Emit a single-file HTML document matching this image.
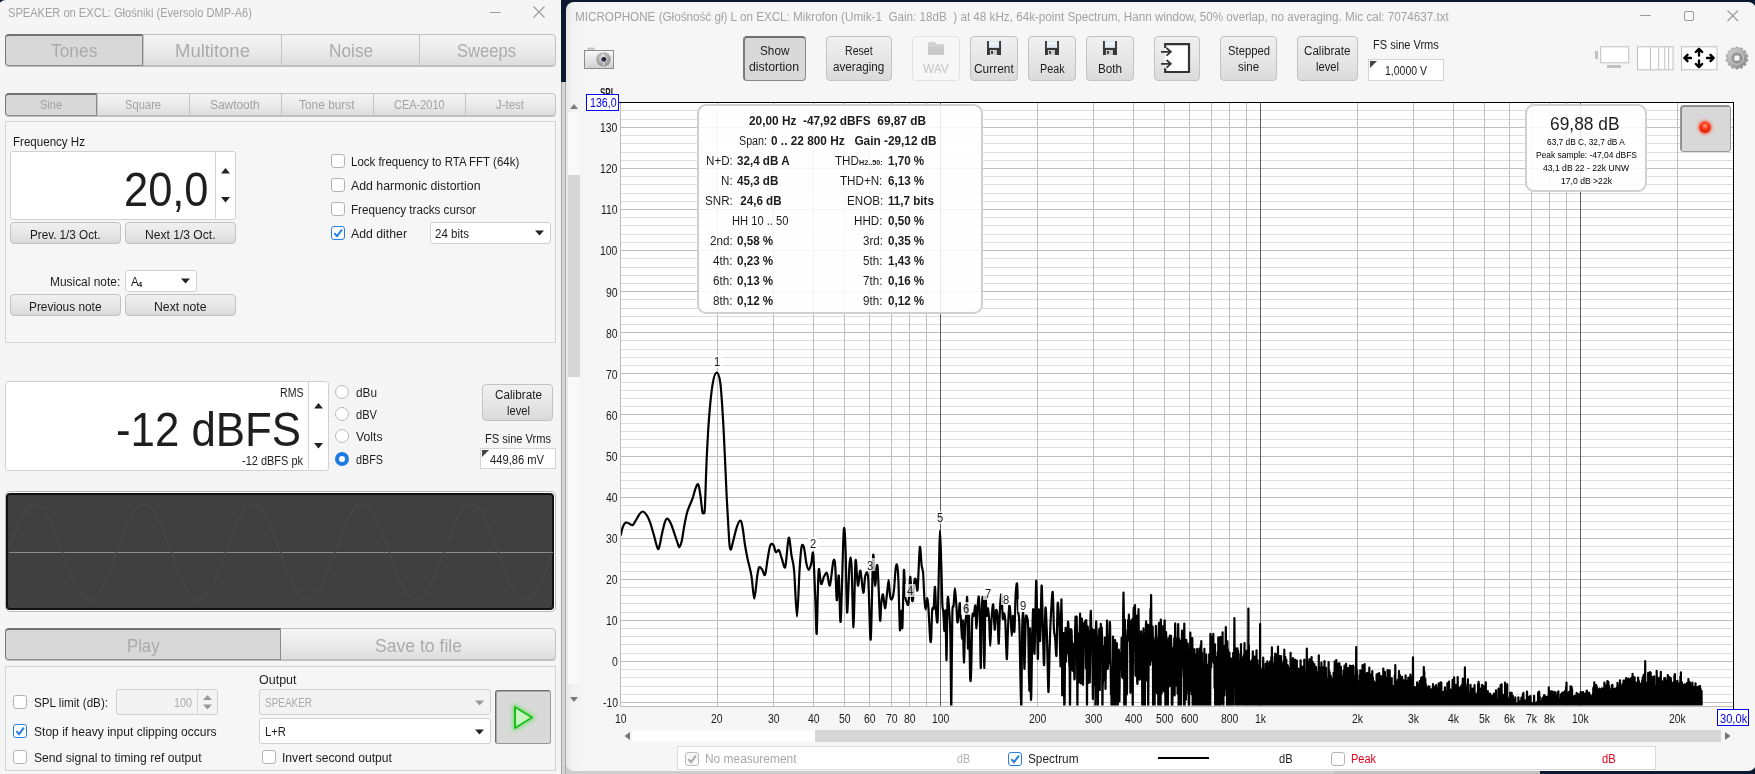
<!DOCTYPE html>
<html><head><meta charset="utf-8"><title>REW</title><style>
html,body{margin:0;padding:0;}
body{width:1755px;height:774px;overflow:hidden;position:relative;background:#f5f5f5;font-family:"Liberation Sans",sans-serif;}
.abs,.t,.tbar,.tsel,.panel,.field,.btn,.cb,.rb{position:absolute;box-sizing:border-box;}
.t{white-space:pre;line-height:1;transform-origin:0 0;}
.tbar{border:1px solid #c2c2c2;border-radius:4px;background:linear-gradient(#f4f4f4,#e9e9e9 60%,#dcdcdc);box-shadow:0 1px 0 #bdbdbd;}
.tsel{border:1px solid #8a8a8a;border-top:2px solid #727272;border-left:1.5px solid #777;background:#d8d8d8;}
.panel{border:1px solid #d4d4d4;background:#f6f6f6;}
.field{border:1px solid #d0d0d0;border-radius:3px;background:#fff;}
.btn{border:1px solid #c2c2c2;border-radius:4px;background:linear-gradient(#f0f0f0,#e6e6e6 55%,#dadada);}
.cb{border:1px solid #b4b4b4;border-radius:3px;background:#fff;}
.cb.on{border-color:#2a7de1;}
.cb.dis{border-color:#bdbdbd;background:#f6f6f6;}
.cb svg{position:absolute;left:0;top:0;}
.rb{border:1px solid #b8b8b8;border-radius:50%;background:#fff;}
.rb.on{border:4.5px solid #1e7be6;}
</style></head><body>
<div class="abs" style="left:0px;top:0px;width:10px;height:10px;background:#0b1a30;"></div>
<div class="abs" style="left:-2px;top:0px;width:563px;height:774px;background:#f5f5f5;border-top-left-radius:8px;"></div>
<span class="t" style="left:8.30px;top:6.62px;font-size:12.5px;color:#a2a2a2;transform:scaleX(0.8869);">SPEAKER on EXCL: Głośniki (Eversolo DMP-A6)</span>
<svg class="abs" style="left:485px;top:2px" width="70" height="22"><path d="M5 10.5H15.5" stroke="#999" stroke-width="1" fill="none"/><path d="M48.5 4.5L59.5 15.5M59.5 4.5L48.5 15.5" stroke="#999" stroke-width="1.1" fill="none"/></svg>
<div class="tbar" style="left:5px;top:34px;width:551px;height:32px;"></div>
<div class="tsel" style="left:5px;top:34px;width:138px;height:32px;border-radius:4px 0 0 4px;"></div>
<div class="abs" style="left:143px;top:35px;width:1px;height:30px;background:#c4c4c4;"></div>
<div class="abs" style="left:281px;top:35px;width:1px;height:30px;background:#c4c4c4;"></div>
<div class="abs" style="left:419px;top:35px;width:1px;height:30px;background:#c4c4c4;"></div>
<span class="t" style="left:51.25px;top:42.14px;font-size:18.5px;color:#ababab;transform:scaleX(0.9379);">Tones</span>
<span class="t" style="left:174.75px;top:42.14px;font-size:18.5px;color:#ababab;transform:scaleX(0.9978);">Multitone</span>
<span class="t" style="left:328.75px;top:42.14px;font-size:18.5px;color:#ababab;transform:scaleX(0.9324);">Noise</span>
<span class="t" style="left:457.35px;top:42.14px;font-size:18.5px;color:#ababab;transform:scaleX(0.8979);">Sweeps</span>
<div class="tbar" style="left:5px;top:93px;width:551px;height:23px;"></div>
<div class="tsel" style="left:5px;top:93px;width:92px;height:23px;border-radius:4px 0 0 4px;"></div>
<div class="abs" style="left:97px;top:94px;width:1px;height:21px;background:#c4c4c4;"></div>
<div class="abs" style="left:189px;top:94px;width:1px;height:21px;background:#c4c4c4;"></div>
<div class="abs" style="left:281px;top:94px;width:1px;height:21px;background:#c4c4c4;"></div>
<div class="abs" style="left:373px;top:94px;width:1px;height:21px;background:#c4c4c4;"></div>
<div class="abs" style="left:465px;top:94px;width:1px;height:21px;background:#c4c4c4;"></div>
<span class="t" style="left:40.25px;top:99.24px;font-size:12px;color:#a2a2a2;transform:scaleX(0.9201);">Sine</span>
<span class="t" style="left:125.15px;top:99.24px;font-size:12px;color:#a2a2a2;transform:scaleX(0.9329);">Square</span>
<span class="t" style="left:209.90px;top:99.24px;font-size:12px;color:#a2a2a2;transform:scaleX(0.9913);">Sawtooth</span>
<span class="t" style="left:299.10px;top:99.24px;font-size:12px;color:#a2a2a2;transform:scaleX(0.9922);">Tone burst</span>
<span class="t" style="left:394.35px;top:99.24px;font-size:12px;color:#a2a2a2;transform:scaleX(0.9157);">CEA-2010</span>
<span class="t" style="left:496.05px;top:99.24px;font-size:12px;color:#a2a2a2;transform:scaleX(0.9510);">J-test</span>
<div class="panel" style="left:5px;top:121px;width:551px;height:222px;"></div>
<span class="t" style="left:13.00px;top:135.52px;font-size:12.5px;color:#1c1c1c;transform:scaleX(0.9253);">Frequency Hz</span>
<div class="field" style="left:10px;top:151px;width:226px;height:69px;"></div>
<div class="abs" style="left:215px;top:152px;width:1px;height:66px;background:#d0d0d0;"></div>
<span class="t" style="left:123.50px;top:165.59px;font-size:47.5px;color:#1e1e1e;transform:scaleX(0.9140);">20,0</span>
<svg class="abs" style="left:216px;top:152px" width="19" height="66"><path d="M5 21.5L9.5 16L14 21.5Z M5 45L9.5 50.5L14 45Z" fill="#222"/></svg>
<div class="btn" style="left:10px;top:222px;width:111px;height:22px;"></div>
<span class="t" style="left:30.05px;top:228.64px;font-size:12px;color:#1c1c1c;transform:scaleX(0.9728);">Prev. 1/3 Oct.</span>
<div class="btn" style="left:125px;top:222px;width:111px;height:22px;"></div>
<span class="t" style="left:145.05px;top:228.64px;font-size:12px;color:#1c1c1c;transform:scaleX(1.0068);">Next 1/3 Oct.</span>
<span class="t" style="left:50.30px;top:276.22px;font-size:12.5px;color:#1c1c1c;transform:scaleX(0.9532);">Musical note:</span>
<div class="field" style="left:125px;top:270px;width:72px;height:22px;"></div>
<span class="t" style="left:130.50px;top:276.22px;font-size:12.5px;color:#1c1c1c;transform:scaleX(0.9300);">A</span>
<span class="t" style="left:138.30px;top:280.63px;font-size:8px;color:#1c1c1c;transform:scaleX(0.9500);font-weight:bold;">4</span>
<svg class="abs" style="left:180px;top:277px" width="12" height="8"><path d="M1 1.5H10L5.5 6.5Z" fill="#222"/></svg>
<div class="btn" style="left:10px;top:294px;width:111px;height:22px;"></div>
<span class="t" style="left:29.05px;top:300.64px;font-size:12px;color:#1c1c1c;transform:scaleX(0.9880);">Previous note</span>
<div class="btn" style="left:125px;top:294px;width:111px;height:22px;"></div>
<span class="t" style="left:154.05px;top:300.64px;font-size:12px;color:#1c1c1c;transform:scaleX(1.0221);">Next note</span>
<div class="cb" style="left:331px;top:154px;width:14px;height:14px;"></div>
<span class="t" style="left:351.40px;top:156.22px;font-size:12.5px;color:#1c1c1c;transform:scaleX(0.9171);">Lock frequency to RTA FFT (64k)</span>
<div class="cb" style="left:331px;top:178px;width:14px;height:14px;"></div>
<span class="t" style="left:351.40px;top:180.22px;font-size:12.5px;color:#1c1c1c;transform:scaleX(0.9861);">Add harmonic distortion</span>
<div class="cb" style="left:331px;top:202px;width:14px;height:14px;"></div>
<span class="t" style="left:351.40px;top:204.22px;font-size:12.5px;color:#1c1c1c;transform:scaleX(0.9323);">Frequency tracks cursor</span>
<div class="cb on" style="left:331px;top:226px;width:14px;height:14px;"><svg width="12" height="12"><path d="M2.3 6.2L5 9.2L9.9 2.6" fill="none" stroke="#2a7de1" stroke-width="2"/></svg></div>
<span class="t" style="left:351.40px;top:228.22px;font-size:12.5px;color:#1c1c1c;transform:scaleX(0.9827);">Add dither</span>
<div class="field" style="left:430px;top:222px;width:121px;height:22px;"></div>
<span class="t" style="left:435.00px;top:228.22px;font-size:12.5px;color:#1c1c1c;transform:scaleX(0.9232);">24 bits</span>
<svg class="abs" style="left:534px;top:229px" width="12" height="8"><path d="M1 1.5H10L5.5 6.5Z" fill="#222"/></svg>
<div class="field" style="left:5px;top:381px;width:324px;height:90px;"></div>
<div class="abs" style="left:308px;top:382px;width:1px;height:87px;background:#d0d0d0;"></div>
<span class="t" style="left:279.50px;top:387.22px;font-size:12.5px;color:#1c1c1c;transform:scaleX(0.8460);">RMS</span>
<span class="t" style="left:116.00px;top:406.17px;font-size:48px;color:#1e1e1e;transform:scaleX(0.9124);">-12 dBFS</span>
<span class="t" style="left:242.00px;top:455.22px;font-size:12.5px;color:#1c1c1c;transform:scaleX(0.8780);">-12 dBFS pk</span>
<svg class="abs" style="left:309px;top:382px" width="19" height="87"><path d="M5 26.5L9.5 21L14 26.5Z M5 61L9.5 66.5L14 61Z" fill="#222"/></svg>
<div class="rb" style="left:335px;top:385px;width:14px;height:14px;"></div>
<span class="t" style="left:356.00px;top:387.12px;font-size:12.5px;color:#1c1c1c;transform:scaleX(0.9442);">dBu</span>
<div class="rb" style="left:335px;top:407px;width:14px;height:14px;"></div>
<span class="t" style="left:356.00px;top:409.02px;font-size:12.5px;color:#1c1c1c;transform:scaleX(0.8888);">dBV</span>
<div class="rb" style="left:335px;top:429px;width:14px;height:14px;"></div>
<span class="t" style="left:356.00px;top:431.02px;font-size:12.5px;color:#1c1c1c;transform:scaleX(0.9778);">Volts</span>
<div class="rb on" style="left:335px;top:452px;width:14px;height:14px;"></div>
<span class="t" style="left:356.00px;top:453.62px;font-size:12.5px;color:#1c1c1c;transform:scaleX(0.8636);">dBFS</span>
<div class="btn" style="left:482px;top:384px;width:71px;height:37px;"></div>
<span class="t" style="left:494.50px;top:389.22px;font-size:12.5px;color:#1c1c1c;transform:scaleX(0.9395);">Calibrate</span>
<span class="t" style="left:506.50px;top:405.22px;font-size:12.5px;color:#1c1c1c;transform:scaleX(0.8946);">level</span>
<span class="t" style="left:485.00px;top:432.62px;font-size:12.5px;color:#1c1c1c;transform:scaleX(0.8853);">FS sine Vrms</span>
<div class="abs" style="left:480px;top:448px;width:76px;height:21px;background:#fff;border:1px solid #d4d4d4;"></div>
<svg class="abs" style="left:481px;top:449px" width="9" height="9"><path d="M1 1H8L1 8Z" fill="#444"/></svg>
<span class="t" style="left:490.00px;top:453.72px;font-size:12.5px;color:#1c1c1c;transform:scaleX(0.8932);">449,86 mV</span>
<div class="abs" style="left:5px;top:491px;width:551px;height:121px;border:1px solid #b8b8b8;border-radius:5px;background:#fff;"></div>
<div class="abs" style="left:6px;top:493px;width:548px;height:117px;border:2px solid #111;border-radius:4px;background:#404040;"></div>
<svg class="abs" style="left:0;top:0" width="561" height="774"><path d="M9 552.5H553" stroke="#8c8c8c" stroke-width="1"/><polyline points="9.0,548.5 9.5,547.2 10.0,545.8 10.5,544.4 11.0,543.1 11.5,541.7 12.0,540.4 12.5,539.0 13.0,537.7 13.5,536.4 14.0,535.1 14.5,533.8 15.0,532.5 15.5,531.3 16.0,530.0 16.5,528.8 17.0,527.6 17.5,526.4 18.0,525.3 18.5,524.1 19.0,523.0 19.5,521.9 20.0,520.9 20.5,519.8 21.0,518.8 21.5,517.8 22.0,516.9 22.5,515.9 23.0,515.0 23.5,514.2 24.0,513.3 24.5,512.5 25.0,511.8 25.5,511.0 26.0,510.3 26.5,509.6 27.0,509.0 27.5,508.4 28.0,507.9 28.5,507.3 29.0,506.8 29.5,506.4 30.0,506.0 30.5,505.6 31.0,505.3 31.5,505.0 32.0,504.7 32.5,504.5 33.0,504.3 33.5,504.2 34.0,504.1 34.5,504.0 35.0,504.0 35.5,504.0 36.0,504.1 36.5,504.2 37.0,504.3 37.5,504.5 38.0,504.7 38.5,505.0 39.0,505.3 39.5,505.6 40.0,506.0 40.5,506.4 41.0,506.8 41.5,507.3 42.0,507.9 42.5,508.4 43.0,509.0 43.5,509.6 44.0,510.3 44.5,511.0 45.0,511.8 45.5,512.5 46.0,513.3 46.5,514.2 47.0,515.0 47.5,515.9 48.0,516.9 48.5,517.8 49.0,518.8 49.5,519.8 50.0,520.9 50.5,521.9 51.0,523.0 51.5,524.1 52.0,525.3 52.5,526.4 53.0,527.6 53.5,528.8 54.0,530.0 54.5,531.3 55.0,532.5 55.5,533.8 56.0,535.1 56.5,536.4 57.0,537.7 57.5,539.0 58.0,540.4 58.5,541.7 59.0,543.1 59.5,544.4 60.0,545.8 60.5,547.2 61.0,548.5 61.5,549.9 62.0,551.3 62.5,552.7 63.0,554.1 63.5,555.5 64.0,556.8 64.5,558.2 65.0,559.6 65.5,560.9 66.0,562.3 66.5,563.6 67.0,565.0 67.5,566.3 68.0,567.6 68.5,568.9 69.0,570.2 69.5,571.5 70.0,572.7 70.5,574.0 71.0,575.2 71.5,576.4 72.0,577.6 72.5,578.7 73.0,579.9 73.5,581.0 74.0,582.1 74.5,583.1 75.0,584.2 75.5,585.2 76.0,586.2 76.5,587.1 77.0,588.1 77.5,589.0 78.0,589.8 78.5,590.7 79.0,591.5 79.5,592.2 80.0,593.0 80.5,593.7 81.0,594.4 81.5,595.0 82.0,595.6 82.5,596.1 83.0,596.7 83.5,597.2 84.0,597.6 84.5,598.0 85.0,598.4 85.5,598.7 86.0,599.0 86.5,599.3 87.0,599.5 87.5,599.7 88.0,599.8 88.5,599.9 89.0,600.0 89.5,600.0 90.0,600.0 90.5,599.9 91.0,599.8 91.5,599.7 92.0,599.5 92.5,599.3 93.0,599.0 93.5,598.7 94.0,598.4 94.5,598.0 95.0,597.6 95.5,597.2 96.0,596.7 96.5,596.1 97.0,595.6 97.5,595.0 98.0,594.4 98.5,593.7 99.0,593.0 99.5,592.2 100.0,591.5 100.5,590.7 101.0,589.8 101.5,589.0 102.0,588.1 102.5,587.1 103.0,586.2 103.5,585.2 104.0,584.2 104.5,583.1 105.0,582.1 105.5,581.0 106.0,579.9 106.5,578.7 107.0,577.6 107.5,576.4 108.0,575.2 108.5,574.0 109.0,572.7 109.5,571.5 110.0,570.2 110.5,568.9 111.0,567.6 111.5,566.3 112.0,565.0 112.5,563.6 113.0,562.3 113.5,560.9 114.0,559.6 114.5,558.2 115.0,556.8 115.5,555.5 116.0,554.1 116.5,552.7 117.0,551.3 117.5,549.9 118.0,548.5 118.5,547.2 119.0,545.8 119.5,544.4 120.0,543.1 120.5,541.7 121.0,540.4 121.5,539.0 122.0,537.7 122.5,536.4 123.0,535.1 123.5,533.8 124.0,532.5 124.5,531.3 125.0,530.0 125.5,528.8 126.0,527.6 126.5,526.4 127.0,525.3 127.5,524.1 128.0,523.0 128.5,521.9 129.0,520.9 129.5,519.8 130.0,518.8 130.5,517.8 131.0,516.9 131.5,515.9 132.0,515.0 132.5,514.2 133.0,513.3 133.5,512.5 134.0,511.8 134.5,511.0 135.0,510.3 135.5,509.6 136.0,509.0 136.5,508.4 137.0,507.9 137.5,507.3 138.0,506.8 138.5,506.4 139.0,506.0 139.5,505.6 140.0,505.3 140.5,505.0 141.0,504.7 141.5,504.5 142.0,504.3 142.5,504.2 143.0,504.1 143.5,504.0 144.0,504.0 144.5,504.0 145.0,504.1 145.5,504.2 146.0,504.3 146.5,504.5 147.0,504.7 147.5,505.0 148.0,505.3 148.5,505.6 149.0,506.0 149.5,506.4 150.0,506.8 150.5,507.3 151.0,507.9 151.5,508.4 152.0,509.0 152.5,509.6 153.0,510.3 153.5,511.0 154.0,511.8 154.5,512.5 155.0,513.3 155.5,514.2 156.0,515.0 156.5,515.9 157.0,516.9 157.5,517.8 158.0,518.8 158.5,519.8 159.0,520.9 159.5,521.9 160.0,523.0 160.5,524.1 161.0,525.3 161.5,526.4 162.0,527.6 162.5,528.8 163.0,530.0 163.5,531.3 164.0,532.5 164.5,533.8 165.0,535.1 165.5,536.4 166.0,537.7 166.5,539.0 167.0,540.4 167.5,541.7 168.0,543.1 168.5,544.4 169.0,545.8 169.5,547.2 170.0,548.5 170.5,549.9 171.0,551.3 171.5,552.7 172.0,554.1 172.5,555.5 173.0,556.8 173.5,558.2 174.0,559.6 174.5,560.9 175.0,562.3 175.5,563.6 176.0,565.0 176.5,566.3 177.0,567.6 177.5,568.9 178.0,570.2 178.5,571.5 179.0,572.7 179.5,574.0 180.0,575.2 180.5,576.4 181.0,577.6 181.5,578.7 182.0,579.9 182.5,581.0 183.0,582.1 183.5,583.1 184.0,584.2 184.5,585.2 185.0,586.2 185.5,587.1 186.0,588.1 186.5,589.0 187.0,589.8 187.5,590.7 188.0,591.5 188.5,592.2 189.0,593.0 189.5,593.7 190.0,594.4 190.5,595.0 191.0,595.6 191.5,596.1 192.0,596.7 192.5,597.2 193.0,597.6 193.5,598.0 194.0,598.4 194.5,598.7 195.0,599.0 195.5,599.3 196.0,599.5 196.5,599.7 197.0,599.8 197.5,599.9 198.0,600.0 198.5,600.0 199.0,600.0 199.5,599.9 200.0,599.8 200.5,599.7 201.0,599.5 201.5,599.3 202.0,599.0 202.5,598.7 203.0,598.4 203.5,598.0 204.0,597.6 204.5,597.2 205.0,596.7 205.5,596.1 206.0,595.6 206.5,595.0 207.0,594.4 207.5,593.7 208.0,593.0 208.5,592.2 209.0,591.5 209.5,590.7 210.0,589.8 210.5,589.0 211.0,588.1 211.5,587.1 212.0,586.2 212.5,585.2 213.0,584.2 213.5,583.1 214.0,582.1 214.5,581.0 215.0,579.9 215.5,578.7 216.0,577.6 216.5,576.4 217.0,575.2 217.5,574.0 218.0,572.7 218.5,571.5 219.0,570.2 219.5,568.9 220.0,567.6 220.5,566.3 221.0,565.0 221.5,563.6 222.0,562.3 222.5,560.9 223.0,559.6 223.5,558.2 224.0,556.8 224.5,555.5 225.0,554.1 225.5,552.7 226.0,551.3 226.5,549.9 227.0,548.5 227.5,547.2 228.0,545.8 228.5,544.4 229.0,543.1 229.5,541.7 230.0,540.4 230.5,539.0 231.0,537.7 231.5,536.4 232.0,535.1 232.5,533.8 233.0,532.5 233.5,531.3 234.0,530.0 234.5,528.8 235.0,527.6 235.5,526.4 236.0,525.3 236.5,524.1 237.0,523.0 237.5,521.9 238.0,520.9 238.5,519.8 239.0,518.8 239.5,517.8 240.0,516.9 240.5,515.9 241.0,515.0 241.5,514.2 242.0,513.3 242.5,512.5 243.0,511.8 243.5,511.0 244.0,510.3 244.5,509.6 245.0,509.0 245.5,508.4 246.0,507.9 246.5,507.3 247.0,506.8 247.5,506.4 248.0,506.0 248.5,505.6 249.0,505.3 249.5,505.0 250.0,504.7 250.5,504.5 251.0,504.3 251.5,504.2 252.0,504.1 252.5,504.0 253.0,504.0 253.5,504.0 254.0,504.1 254.5,504.2 255.0,504.3 255.5,504.5 256.0,504.7 256.5,505.0 257.0,505.3 257.5,505.6 258.0,506.0 258.5,506.4 259.0,506.8 259.5,507.3 260.0,507.9 260.5,508.4 261.0,509.0 261.5,509.6 262.0,510.3 262.5,511.0 263.0,511.8 263.5,512.5 264.0,513.3 264.5,514.2 265.0,515.0 265.5,515.9 266.0,516.9 266.5,517.8 267.0,518.8 267.5,519.8 268.0,520.9 268.5,521.9 269.0,523.0 269.5,524.1 270.0,525.3 270.5,526.4 271.0,527.6 271.5,528.8 272.0,530.0 272.5,531.3 273.0,532.5 273.5,533.8 274.0,535.1 274.5,536.4 275.0,537.7 275.5,539.0 276.0,540.4 276.5,541.7 277.0,543.1 277.5,544.4 278.0,545.8 278.5,547.2 279.0,548.5 279.5,549.9 280.0,551.3 280.5,552.7 281.0,554.1 281.5,555.5 282.0,556.8 282.5,558.2 283.0,559.6 283.5,560.9 284.0,562.3 284.5,563.6 285.0,565.0 285.5,566.3 286.0,567.6 286.5,568.9 287.0,570.2 287.5,571.5 288.0,572.7 288.5,574.0 289.0,575.2 289.5,576.4 290.0,577.6 290.5,578.7 291.0,579.9 291.5,581.0 292.0,582.1 292.5,583.1 293.0,584.2 293.5,585.2 294.0,586.2 294.5,587.1 295.0,588.1 295.5,589.0 296.0,589.8 296.5,590.7 297.0,591.5 297.5,592.2 298.0,593.0 298.5,593.7 299.0,594.4 299.5,595.0 300.0,595.6 300.5,596.1 301.0,596.7 301.5,597.2 302.0,597.6 302.5,598.0 303.0,598.4 303.5,598.7 304.0,599.0 304.5,599.3 305.0,599.5 305.5,599.7 306.0,599.8 306.5,599.9 307.0,600.0 307.5,600.0 308.0,600.0 308.5,599.9 309.0,599.8 309.5,599.7 310.0,599.5 310.5,599.3 311.0,599.0 311.5,598.7 312.0,598.4 312.5,598.0 313.0,597.6 313.5,597.2 314.0,596.7 314.5,596.1 315.0,595.6 315.5,595.0 316.0,594.4 316.5,593.7 317.0,593.0 317.5,592.2 318.0,591.5 318.5,590.7 319.0,589.8 319.5,589.0 320.0,588.1 320.5,587.1 321.0,586.2 321.5,585.2 322.0,584.2 322.5,583.1 323.0,582.1 323.5,581.0 324.0,579.9 324.5,578.7 325.0,577.6 325.5,576.4 326.0,575.2 326.5,574.0 327.0,572.7 327.5,571.5 328.0,570.2 328.5,568.9 329.0,567.6 329.5,566.3 330.0,565.0 330.5,563.6 331.0,562.3 331.5,560.9 332.0,559.6 332.5,558.2 333.0,556.8 333.5,555.5 334.0,554.1 334.5,552.7 335.0,551.3 335.5,549.9 336.0,548.5 336.5,547.2 337.0,545.8 337.5,544.4 338.0,543.1 338.5,541.7 339.0,540.4 339.5,539.0 340.0,537.7 340.5,536.4 341.0,535.1 341.5,533.8 342.0,532.5 342.5,531.3 343.0,530.0 343.5,528.8 344.0,527.6 344.5,526.4 345.0,525.3 345.5,524.1 346.0,523.0 346.5,521.9 347.0,520.9 347.5,519.8 348.0,518.8 348.5,517.8 349.0,516.9 349.5,515.9 350.0,515.0 350.5,514.2 351.0,513.3 351.5,512.5 352.0,511.8 352.5,511.0 353.0,510.3 353.5,509.6 354.0,509.0 354.5,508.4 355.0,507.9 355.5,507.3 356.0,506.8 356.5,506.4 357.0,506.0 357.5,505.6 358.0,505.3 358.5,505.0 359.0,504.7 359.5,504.5 360.0,504.3 360.5,504.2 361.0,504.1 361.5,504.0 362.0,504.0 362.5,504.0 363.0,504.1 363.5,504.2 364.0,504.3 364.5,504.5 365.0,504.7 365.5,505.0 366.0,505.3 366.5,505.6 367.0,506.0 367.5,506.4 368.0,506.8 368.5,507.3 369.0,507.9 369.5,508.4 370.0,509.0 370.5,509.6 371.0,510.3 371.5,511.0 372.0,511.8 372.5,512.5 373.0,513.3 373.5,514.2 374.0,515.0 374.5,515.9 375.0,516.9 375.5,517.8 376.0,518.8 376.5,519.8 377.0,520.9 377.5,521.9 378.0,523.0 378.5,524.1 379.0,525.3 379.5,526.4 380.0,527.6 380.5,528.8 381.0,530.0 381.5,531.3 382.0,532.5 382.5,533.8 383.0,535.1 383.5,536.4 384.0,537.7 384.5,539.0 385.0,540.4 385.5,541.7 386.0,543.1 386.5,544.4 387.0,545.8 387.5,547.2 388.0,548.5 388.5,549.9 389.0,551.3 389.5,552.7 390.0,554.1 390.5,555.5 391.0,556.8 391.5,558.2 392.0,559.6 392.5,560.9 393.0,562.3 393.5,563.6 394.0,565.0 394.5,566.3 395.0,567.6 395.5,568.9 396.0,570.2 396.5,571.5 397.0,572.7 397.5,574.0 398.0,575.2 398.5,576.4 399.0,577.6 399.5,578.7 400.0,579.9 400.5,581.0 401.0,582.1 401.5,583.1 402.0,584.2 402.5,585.2 403.0,586.2 403.5,587.1 404.0,588.1 404.5,589.0 405.0,589.8 405.5,590.7 406.0,591.5 406.5,592.2 407.0,593.0 407.5,593.7 408.0,594.4 408.5,595.0 409.0,595.6 409.5,596.1 410.0,596.7 410.5,597.2 411.0,597.6 411.5,598.0 412.0,598.4 412.5,598.7 413.0,599.0 413.5,599.3 414.0,599.5 414.5,599.7 415.0,599.8 415.5,599.9 416.0,600.0 416.5,600.0 417.0,600.0 417.5,599.9 418.0,599.8 418.5,599.7 419.0,599.5 419.5,599.3 420.0,599.0 420.5,598.7 421.0,598.4 421.5,598.0 422.0,597.6 422.5,597.2 423.0,596.7 423.5,596.1 424.0,595.6 424.5,595.0 425.0,594.4 425.5,593.7 426.0,593.0 426.5,592.2 427.0,591.5 427.5,590.7 428.0,589.8 428.5,589.0 429.0,588.1 429.5,587.1 430.0,586.2 430.5,585.2 431.0,584.2 431.5,583.1 432.0,582.1 432.5,581.0 433.0,579.9 433.5,578.7 434.0,577.6 434.5,576.4 435.0,575.2 435.5,574.0 436.0,572.7 436.5,571.5 437.0,570.2 437.5,568.9 438.0,567.6 438.5,566.3 439.0,565.0 439.5,563.6 440.0,562.3 440.5,560.9 441.0,559.6 441.5,558.2 442.0,556.8 442.5,555.5 443.0,554.1 443.5,552.7 444.0,551.3 444.5,549.9 445.0,548.5 445.5,547.2 446.0,545.8 446.5,544.4 447.0,543.1 447.5,541.7 448.0,540.4 448.5,539.0 449.0,537.7 449.5,536.4 450.0,535.1 450.5,533.8 451.0,532.5 451.5,531.3 452.0,530.0 452.5,528.8 453.0,527.6 453.5,526.4 454.0,525.3 454.5,524.1 455.0,523.0 455.5,521.9 456.0,520.9 456.5,519.8 457.0,518.8 457.5,517.8 458.0,516.9 458.5,515.9 459.0,515.0 459.5,514.2 460.0,513.3 460.5,512.5 461.0,511.8 461.5,511.0 462.0,510.3 462.5,509.6 463.0,509.0 463.5,508.4 464.0,507.9 464.5,507.3 465.0,506.8 465.5,506.4 466.0,506.0 466.5,505.6 467.0,505.3 467.5,505.0 468.0,504.7 468.5,504.5 469.0,504.3 469.5,504.2 470.0,504.1 470.5,504.0 471.0,504.0 471.5,504.0 472.0,504.1 472.5,504.2 473.0,504.3 473.5,504.5 474.0,504.7 474.5,505.0 475.0,505.3 475.5,505.6 476.0,506.0 476.5,506.4 477.0,506.8 477.5,507.3 478.0,507.9 478.5,508.4 479.0,509.0 479.5,509.6 480.0,510.3 480.5,511.0 481.0,511.8 481.5,512.5 482.0,513.3 482.5,514.2 483.0,515.0 483.5,515.9 484.0,516.9 484.5,517.8 485.0,518.8 485.5,519.8 486.0,520.9 486.5,521.9 487.0,523.0 487.5,524.1 488.0,525.3 488.5,526.4 489.0,527.6 489.5,528.8 490.0,530.0 490.5,531.3 491.0,532.5 491.5,533.8 492.0,535.1 492.5,536.4 493.0,537.7 493.5,539.0 494.0,540.4 494.5,541.7 495.0,543.1 495.5,544.4 496.0,545.8 496.5,547.2 497.0,548.5 497.5,549.9 498.0,551.3 498.5,552.7 499.0,554.1 499.5,555.5 500.0,556.8 500.5,558.2 501.0,559.6 501.5,560.9 502.0,562.3 502.5,563.6 503.0,565.0 503.5,566.3 504.0,567.6 504.5,568.9 505.0,570.2 505.5,571.5 506.0,572.7 506.5,574.0 507.0,575.2 507.5,576.4 508.0,577.6 508.5,578.7 509.0,579.9 509.5,581.0 510.0,582.1 510.5,583.1 511.0,584.2 511.5,585.2 512.0,586.2 512.5,587.1 513.0,588.1 513.5,589.0 514.0,589.8 514.5,590.7 515.0,591.5 515.5,592.2 516.0,593.0 516.5,593.7 517.0,594.4 517.5,595.0 518.0,595.6 518.5,596.1 519.0,596.7 519.5,597.2 520.0,597.6 520.5,598.0 521.0,598.4 521.5,598.7 522.0,599.0 522.5,599.3 523.0,599.5 523.5,599.7 524.0,599.8 524.5,599.9 525.0,600.0 525.5,600.0 526.0,600.0 526.5,599.9 527.0,599.8 527.5,599.7 528.0,599.5 528.5,599.3 529.0,599.0 529.5,598.7 530.0,598.4 530.5,598.0 531.0,597.6 531.5,597.2 532.0,596.7 532.5,596.1 533.0,595.6 533.5,595.0 534.0,594.4 534.5,593.7 535.0,593.0 535.5,592.2 536.0,591.5 536.5,590.7 537.0,589.8 537.5,589.0 538.0,588.1 538.5,587.1 539.0,586.2 539.5,585.2 540.0,584.2 540.5,583.1 541.0,582.1 541.5,581.0 542.0,579.9 542.5,578.7 543.0,577.6 543.5,576.4 544.0,575.2 544.5,574.0 545.0,572.7 545.5,571.5 546.0,570.2 546.5,568.9 547.0,567.6 547.5,566.3 548.0,565.0 548.5,563.6 549.0,562.3 549.5,560.9 550.0,559.6 550.5,558.2 551.0,556.8 551.5,555.5 552.0,554.1" fill="none" stroke="#484848" stroke-width="1.3"/></svg>
<div class="tbar" style="left:5px;top:628px;width:551px;height:32px;"></div>
<div class="tsel" style="left:5px;top:628px;width:276px;height:32px;border-radius:4px 0 0 4px;"></div>
<span class="t" style="left:126.75px;top:637.14px;font-size:18.5px;color:#ababab;transform:scaleX(0.9030);">Play</span>
<span class="t" style="left:374.50px;top:637.14px;font-size:18.5px;color:#ababab;transform:scaleX(0.9506);">Save to file</span>
<div class="panel" style="left:5px;top:666px;width:551px;height:105px;"></div>
<div class="cb" style="left:13px;top:695px;width:14px;height:14px;"></div>
<span class="t" style="left:33.50px;top:697.22px;font-size:12.5px;color:#1c1c1c;transform:scaleX(0.9318);">SPL limit (dB):</span>
<div class="field" style="left:116px;top:689px;width:102px;height:26px;background:#f3f3f3;"></div>
<div class="abs" style="left:197px;top:690px;width:1px;height:24px;background:#d6d6d6;"></div>
<span class="t" style="left:174.00px;top:697.22px;font-size:12.5px;color:#aaa;transform:scaleX(0.8630);">100</span>
<svg class="abs" style="left:198px;top:690px" width="19" height="24"><path d="M5 10L9.5 5L14 10Z M5 14.5L9.5 19.5L14 14.5Z" fill="#999"/></svg>
<div class="cb on" style="left:13px;top:724px;width:14px;height:14px;"><svg width="12" height="12"><path d="M2.3 6.2L5 9.2L9.9 2.6" fill="none" stroke="#2a7de1" stroke-width="2"/></svg></div>
<span class="t" style="left:33.50px;top:726.42px;font-size:12.5px;color:#1c1c1c;transform:scaleX(0.9656);">Stop if heavy input clipping occurs</span>
<div class="cb" style="left:13px;top:750px;width:14px;height:14px;"></div>
<span class="t" style="left:33.50px;top:752.42px;font-size:12.5px;color:#1c1c1c;transform:scaleX(0.9720);">Send signal to timing ref output</span>
<span class="t" style="left:259.20px;top:674.22px;font-size:12.5px;color:#1c1c1c;transform:scaleX(0.9993);">Output</span>
<div class="field" style="left:259px;top:689px;width:232px;height:26px;background:#f3f3f3;"></div>
<span class="t" style="left:264.50px;top:697.22px;font-size:12.5px;color:#aaa;transform:scaleX(0.7959);">SPEAKER</span>
<svg class="abs" style="left:474px;top:699px" width="12" height="8"><path d="M1 1.5H10L5.5 6.5Z" fill="#999"/></svg>
<div class="field" style="left:259px;top:718px;width:232px;height:26px;"></div>
<span class="t" style="left:264.50px;top:726.42px;font-size:12.5px;color:#1c1c1c;transform:scaleX(0.9021);">L+R</span>
<svg class="abs" style="left:474px;top:728px" width="12" height="8"><path d="M1 1.5H10L5.5 6.5Z" fill="#222"/></svg>
<div class="abs" style="left:495px;top:690px;width:56px;height:54px;background:#d9d9d9;border:1px solid #9a9a9a;border-top-color:#6e6e6e;border-left-color:#6e6e6e;border-radius:3px;box-shadow:inset 1px 1px 0 #a8a8a8;"></div>
<svg class="abs" style="left:505px;top:700px" width="36" height="36"><defs><filter id="gl" x="-50%" y="-50%" width="200%" height="200%"><feGaussianBlur stdDeviation="2"/></filter></defs><path d="M10 7L27 17.5L10 28Z" fill="none" stroke="#3fe23f" stroke-width="4" filter="url(#gl)" opacity=".7"/><path d="M10 7L27 17.5L10 28Z" fill="#c8f5c0" stroke="#19c019" stroke-width="2" stroke-linejoin="round"/></svg>
<div class="cb" style="left:262px;top:750px;width:14px;height:14px;"></div>
<span class="t" style="left:282.00px;top:752.42px;font-size:12.5px;color:#1c1c1c;transform:scaleX(0.9711);">Invert second output</span>
<div class="abs" style="left:561px;top:0px;width:5px;height:774px;background:#d4d4d4;border-left:1px solid #a6a6a6;border-right:1px solid #adadad;box-sizing:border-box;"></div>
<div class="abs" style="left:561px;top:0px;width:5px;height:82px;background:#0b1a30;"></div>
<div class="abs" style="left:566px;top:0px;width:1189px;height:774px;background:#cdcdcd;"></div>
<div class="abs" style="left:566px;top:0px;width:1189px;height:14px;background:#0b1a30;"></div>
<div class="abs" style="left:566px;top:0px;width:12px;height:82px;background:#0b1a30;"></div>
<div class="abs" style="left:1743px;top:0px;width:12px;height:774px;background:#0b1a30;"></div>
<div class="abs" style="left:1540px;top:758px;width:215px;height:16px;background:#0b1a30;"></div>
<div class="abs" style="left:1334px;top:771px;width:206px;height:3px;background:#c2c2c2;"></div>
<div class="abs" style="left:566px;top:2px;width:1189.6px;height:769px;background:linear-gradient(to right,#e6e6e6,#f1f1f1 6px,#f6f6f6 22px);border-radius:8px;"></div>
<span class="t" style="left:574.50px;top:11.42px;font-size:12.5px;color:#a2a2a2;transform:scaleX(0.9335);">MICROPHONE (Głośność gł) L on EXCL: Mikrofon (Umik-1  Gain: 18dB  ) at 48 kHz, 64k-point Spectrum, Hann window, 50% overlap, no averaging. Mic cal: 7074637.txt</span>
<svg class="abs" style="left:1630px;top:4px" width="120" height="24"><path d="M10 11.5H20.5" stroke="#999" stroke-width="1" fill="none"/><rect x="54.5" y="7.5" width="9" height="9" rx="1.5" fill="none" stroke="#999"/><path d="M97.5 6.5L108 17M108 6.5L97.5 17" stroke="#999" stroke-width="1.1" fill="none"/></svg>
<svg class="abs" style="left:580px;top:44px" width="40" height="30"><defs><linearGradient id="cb" x1="0" y1="0" x2="0" y2="1"><stop offset="0" stop-color="#fafafa"/><stop offset="1" stop-color="#cfcfcf"/></linearGradient><radialGradient id="cl" cx=".45" cy=".4" r=".6"><stop offset="0" stop-color="#f4f4f4"/><stop offset=".5" stop-color="#b4b4b4"/><stop offset="1" stop-color="#909090"/></radialGradient></defs><rect x="8" y="4" width="6" height="3" fill="#d0d0d0" stroke="#aaa" stroke-width=".6"/><rect x="4.5" y="6.5" width="29" height="18" fill="url(#cb)" stroke="#8c8c8c"/><path d="M5 7L8 10V21L5 24" fill="none" stroke="#e8e8e8"/><circle cx="23.5" cy="15.4" r="7.2" fill="url(#cl)"/><circle cx="23.7" cy="15.2" r="2.3" fill="#1a1a22"/><circle cx="23.2" cy="15.6" r=".8" fill="#3344cc"/><path d="M23.2 9V12.2M23.6 18.6V21.5" stroke="#fff" stroke-width="1.2" opacity=".7"/></svg>
<div class="abs" style="left:743px;top:36px;width:63px;height:45px;background:#d9d9d9;border:1px solid #8a8a8a;border-top:2px solid #707070;border-left:2px solid #7c7c7c;border-radius:4px;"></div>
<span class="t" style="left:759.80px;top:45.32px;font-size:12.5px;color:#1c1c1c;transform:scaleX(0.9402);">Show</span>
<span class="t" style="left:749.45px;top:61.22px;font-size:12.5px;color:#1c1c1c;transform:scaleX(0.9877);">distortion</span>
<div class="btn" style="left:826px;top:36px;width:66px;height:45px;"></div>
<span class="t" style="left:845.35px;top:45.32px;font-size:12.5px;color:#1c1c1c;transform:scaleX(0.8483);">Reset</span>
<span class="t" style="left:833.35px;top:61.22px;font-size:12.5px;color:#1c1c1c;transform:scaleX(0.9344);">averaging</span>
<div class="abs" style="left:912px;top:36px;width:48px;height:45px;background:#f7f7f7;border:1px solid #e2e2e2;border-radius:4px;"></div>
<svg class="abs" style="left:926px;top:40px" width="20" height="17"><path d="M2 3.5Q2 2 3.5 2H9L10.5 4H16.5Q18 4 18 5.5V8H2Z" fill="#d2d2d2"/><rect x="2" y="7" width="16" height="8" rx="1.5" fill="#c9c9c9"/></svg>
<span class="t" style="left:923.15px;top:62.92px;font-size:12.5px;color:#c2c2c2;transform:scaleX(0.9490);">WAV</span>
<div class="btn" style="left:970px;top:36px;width:48px;height:45px;"></div>
<svg class="abs" style="left:986px;top:40px" width="16" height="16"><path d="M1 1H15V15H1Z" fill="#383838"/><rect x="2.9" y="1" width="10.2" height="6.9" fill="#dfe9f3"/><path d="M4 3.3H12" stroke="#fff" stroke-width="1"/><path d="M4 5.3H12" stroke="#eef4fa" stroke-width=".8"/><rect x="3.9" y="10" width="7" height="5" fill="#cfcfcf"/><rect x="5.2" y="11" width="1.6" height="2.9" fill="#222"/></svg>
<span class="t" style="left:974.35px;top:62.92px;font-size:12.5px;color:#1c1c1c;transform:scaleX(0.9524);">Current</span>
<div class="btn" style="left:1028px;top:36px;width:48px;height:45px;"></div>
<svg class="abs" style="left:1044px;top:40px" width="16" height="16"><path d="M1 1H15V15H1Z" fill="#383838"/><rect x="2.9" y="1" width="10.2" height="6.9" fill="#dfe9f3"/><path d="M4 3.3H12" stroke="#fff" stroke-width="1"/><path d="M4 5.3H12" stroke="#eef4fa" stroke-width=".8"/><rect x="3.9" y="10" width="7" height="5" fill="#cfcfcf"/><rect x="5.2" y="11" width="1.6" height="2.9" fill="#222"/></svg>
<span class="t" style="left:1039.85px;top:62.92px;font-size:12.5px;color:#1c1c1c;transform:scaleX(0.8669);">Peak</span>
<div class="btn" style="left:1086px;top:36px;width:48px;height:45px;"></div>
<svg class="abs" style="left:1102px;top:40px" width="16" height="16"><path d="M1 1H15V15H1Z" fill="#383838"/><rect x="2.9" y="1" width="10.2" height="6.9" fill="#dfe9f3"/><path d="M4 3.3H12" stroke="#fff" stroke-width="1"/><path d="M4 5.3H12" stroke="#eef4fa" stroke-width=".8"/><rect x="3.9" y="10" width="7" height="5" fill="#cfcfcf"/><rect x="5.2" y="11" width="1.6" height="2.9" fill="#222"/></svg>
<span class="t" style="left:1098.20px;top:62.92px;font-size:12.5px;color:#1c1c1c;transform:scaleX(0.9333);">Both</span>
<div class="btn" style="left:1154px;top:36px;width:46px;height:45px;"></div>
<svg class="abs" style="left:1158px;top:40px" width="36" height="36"><path d="M7.2 8V4.2H31V32H7.2V28.2" fill="#fff" stroke="#333" stroke-width="2.2"/><rect x="7.2" y="8" width="3" height="20" fill="#fff"/><path d="M3 11.8H12.5M8.5 8L12.8 11.8L8.5 15.6M3 23.8H12.5M8.5 20L12.8 23.8L8.5 27.6" fill="none" stroke="#333" stroke-width="1.8"/></svg>
<div class="btn" style="left:1220px;top:36px;width:57px;height:45px;"></div>
<span class="t" style="left:1227.60px;top:45.32px;font-size:12.5px;color:#1c1c1c;transform:scaleX(0.9018);">Stepped</span>
<span class="t" style="left:1238.10px;top:61.22px;font-size:12.5px;color:#1c1c1c;transform:scaleX(0.9158);">sine</span>
<div class="btn" style="left:1297px;top:36px;width:61px;height:45px;"></div>
<span class="t" style="left:1304.25px;top:45.32px;font-size:12.5px;color:#1c1c1c;transform:scaleX(0.9295);">Calibrate</span>
<span class="t" style="left:1316.00px;top:61.22px;font-size:12.5px;color:#1c1c1c;transform:scaleX(0.8946);">level</span>
<span class="t" style="left:1373.00px;top:38.72px;font-size:12.5px;color:#1c1c1c;transform:scaleX(0.8826);">FS sine Vrms</span>
<div class="abs" style="left:1368px;top:59px;width:76px;height:22px;background:#fff;border:1px solid #d4d4d4;"></div>
<svg class="abs" style="left:1369px;top:60px" width="9" height="9"><path d="M1 1H8L1 8Z" fill="#444"/></svg>
<span class="t" style="left:1384.50px;top:65.02px;font-size:12.5px;color:#1c1c1c;transform:scaleX(0.8393);">1,0000 V</span>
<svg class="abs" style="left:1590px;top:40px" width="165" height="36">
<rect x="5" y="11" width="3" height="8" fill="#c2c2c2"/><rect x="10.7" y="6.8" width="28" height="16" fill="#fff" stroke="#c0c0c0"/><rect x="17" y="25" width="14" height="3" fill="#c2c2c2"/>
<rect x="47.5" y="6.8" width="35.5" height="23" fill="#fff" stroke="#c0c0c0"/><path d="M60.5 7V30M68.7 7V30M74.8 7V30M78.6 7V30" stroke="#c0c0c0"/>
<rect x="91.5" y="6.8" width="35.5" height="23" fill="#fff" stroke="#c0c0c0"/>
<g stroke="#000" stroke-width="2.4" fill="none" stroke-linecap="round" stroke-linejoin="round"><path d="M109 15.5V9M105.8 12L109 8.8L112.2 12"/><path d="M109 20.5V27M105.8 24L109 27.2L112.2 24"/><path d="M101 18H94.5M97.5 14.8L94.3 18L97.5 21.2"/><path d="M117 18H123.5M120.5 14.8L123.7 18L120.5 21.2"/></g>
<defs><linearGradient id="gg" gradientUnits="userSpaceOnUse" x1="-9" y1="-9" x2="9" y2="9"><stop offset="0" stop-color="#d6d6d6"/><stop offset="1" stop-color="#858585"/></linearGradient></defs>
<g transform="translate(147,18.1)"><path d="M-1.40 -9.29L-1.10 -10.95L1.10 -10.95L1.40 -9.29L2.77 -8.98L3.76 -10.34L5.74 -9.38L5.30 -7.76L6.39 -6.89L7.87 -7.68L9.24 -5.97L8.14 -4.70L8.75 -3.44L10.43 -3.51L10.91 -1.36L9.37 -0.70L9.37 0.70L10.91 1.36L10.43 3.51L8.75 3.44L8.14 4.70L9.24 5.97L7.87 7.68L6.39 6.89L5.30 7.76L5.74 9.38L3.76 10.34L2.77 8.98L1.40 9.29L1.10 10.95L-1.10 10.95L-1.40 9.29L-2.77 8.98L-3.76 10.34L-5.74 9.38L-5.30 7.76L-6.39 6.89L-7.87 7.68L-9.24 5.97L-8.14 4.70L-8.75 3.44L-10.43 3.51L-10.91 1.36L-9.37 0.70L-9.37 -0.70L-10.91 -1.36L-10.43 -3.51L-8.75 -3.44L-8.14 -4.70L-9.24 -5.97L-7.87 -7.68L-6.39 -6.89L-5.30 -7.76L-5.74 -9.38L-3.76 -10.34L-2.77 -8.98Z" fill="url(#gg)" stroke="#8c8c8c" stroke-width=".7" stroke-linejoin="round"/><circle r="6.2" fill="none" stroke="#bdbdbd" stroke-width="1.6"/><circle r="4.6" fill="none" stroke="#8a8a8a" stroke-width="1.4"/><rect x="-2.9" y="-2.9" width="5.8" height="5.8" rx="1.6" fill="#f5f5f5" stroke="#8a8a8a" stroke-width=".7"/></g></svg>
<div class="abs" style="left:568px;top:112px;width:12px;height:572px;background:#f9f9f9;"></div>
<div class="abs" style="left:568px;top:175px;width:12px;height:202px;background:#d6d6d6;"></div>
<svg class="abs" style="left:568px;top:100px" width="14" height="610"><path d="M2 9H10L6 4Z M2 597H10L6 602Z" fill="#7a7a7a"/></svg>
<svg class="abs" style="left:0;top:0" width="1755" height="774"><defs><clipPath id="pc"><rect x="620.3" y="102.0" width="1112.7" height="603.5"/></clipPath></defs><rect x="620" y="102" width="1114" height="605" fill="#fff"/><path d="M620.3 694.5H1733.0M620.3 686.5H1733.0M620.3 677.5H1733.0M620.3 669.5H1733.0M620.3 653.5H1733.0M620.3 644.5H1733.0M620.3 636.5H1733.0M620.3 628.5H1733.0M620.3 612.5H1733.0M620.3 603.5H1733.0M620.3 595.5H1733.0M620.3 587.5H1733.0M620.3 571.5H1733.0M620.3 562.5H1733.0M620.3 554.5H1733.0M620.3 546.5H1733.0M620.3 529.5H1733.0M620.3 521.5H1733.0M620.3 513.5H1733.0M620.3 505.5H1733.0M620.3 488.5H1733.0M620.3 480.5H1733.0M620.3 472.5H1733.0M620.3 464.5H1733.0M620.3 447.5H1733.0M620.3 439.5H1733.0M620.3 431.5H1733.0M620.3 423.5H1733.0M620.3 406.5H1733.0M620.3 398.5H1733.0M620.3 390.5H1733.0M620.3 382.5H1733.0M620.3 365.5H1733.0M620.3 357.5H1733.0M620.3 349.5H1733.0M620.3 340.5H1733.0M620.3 324.5H1733.0M620.3 316.5H1733.0M620.3 308.5H1733.0M620.3 299.5H1733.0M620.3 283.5H1733.0M620.3 275.5H1733.0M620.3 267.5H1733.0M620.3 258.5H1733.0M620.3 242.5H1733.0M620.3 234.5H1733.0M620.3 225.5H1733.0M620.3 217.5H1733.0M620.3 201.5H1733.0M620.3 193.5H1733.0M620.3 184.5H1733.0M620.3 176.5H1733.0M620.3 160.5H1733.0M620.3 152.5H1733.0M620.3 143.5H1733.0M620.3 135.5H1733.0M620.3 119.5H1733.0M620.3 110.5H1733.0" stroke="#dedede" stroke-width="1"/><path d="M620.3 702.5H1733.0M620.3 661.5H1733.0M620.3 620.5H1733.0M620.3 579.5H1733.0M620.3 538.5H1733.0M620.3 497.5H1733.0M620.3 456.5H1733.0M620.3 414.5H1733.0M620.3 373.5H1733.0M620.3 332.5H1733.0M620.3 291.5H1733.0M620.3 250.5H1733.0M620.3 209.5H1733.0M620.3 168.5H1733.0M620.3 127.5H1733.0" stroke="#bdbdbd" stroke-width="1"/><path d="M717.5 102.0V706.0M773.5 102.0V706.0M813.5 102.0V706.0M844.5 102.0V706.0M869.5 102.0V706.0M891.5 102.0V706.0M909.5 102.0V706.0M926.5 102.0V706.0M1037.5 102.0V706.0M1093.5 102.0V706.0M1133.5 102.0V706.0M1164.5 102.0V706.0M1189.5 102.0V706.0M1211.5 102.0V706.0M1229.5 102.0V706.0M1246.5 102.0V706.0M1357.5 102.0V706.0M1413.5 102.0V706.0M1453.5 102.0V706.0M1484.5 102.0V706.0M1509.5 102.0V706.0M1531.5 102.0V706.0M1549.5 102.0V706.0M1566.5 102.0V706.0M1677.5 102.0V706.0" stroke="#c0c0c0" stroke-width="1"/><path d="M940.5 102.0V706.0M1260.5 102.0V706.0M1580.5 102.0V706.0" stroke="#5c5c5c" stroke-width="1"/><g clip-path="url(#pc)"><path d="M620.7 535.5C621.0 534.1 622.0 529.1 622.8 527.0C623.6 524.9 624.9 523.1 625.9 522.6C626.9 522.1 628.1 523.2 629.2 523.6C630.3 524.0 631.6 525.7 632.6 525.2C633.6 524.7 634.6 522.3 635.7 520.5C636.8 518.7 638.4 515.5 639.5 514.1C640.6 512.7 641.6 511.5 642.6 511.5C643.6 511.5 644.8 512.5 646.0 514.1C647.2 515.7 648.7 518.5 649.9 521.8C651.1 525.1 652.7 530.9 653.8 534.8C654.9 538.7 656.0 543.7 656.8 546.0C657.6 548.3 658.0 549.5 658.5 549.0C659.0 548.5 659.7 545.1 660.2 543.0C660.7 540.9 660.8 539.2 661.5 536.0C662.2 532.8 663.7 525.9 664.6 523.1C665.5 520.3 666.2 518.7 667.2 518.7C668.2 518.7 669.4 520.7 670.6 523.1C671.8 525.5 673.2 530.0 674.4 533.5C675.6 537.0 677.5 543.0 678.3 545.1C679.1 547.2 679.1 547.5 679.6 546.9C680.1 546.3 680.9 544.6 681.7 541.2C682.5 537.8 683.4 530.5 684.3 525.7C685.2 520.9 686.1 515.8 687.4 511.5C688.7 507.2 691.2 502.3 692.5 498.6C693.8 494.9 694.7 490.5 695.6 488.2C696.5 485.9 697.4 483.4 698.2 484.4C699.0 485.4 699.6 490.4 700.3 494.7C701.0 499.0 701.8 508.6 702.3 511.5C702.8 514.4 703.2 513.4 703.6 512.8C704.0 512.2 704.4 516.3 704.9 507.6C705.4 498.9 706.0 473.4 706.7 458.5C707.4 443.6 708.3 426.6 709.3 414.6C710.3 402.6 711.5 390.3 712.7 383.6C713.9 376.9 715.4 372.7 716.6 372.7C717.8 372.7 719.3 374.8 720.4 383.6C721.5 392.4 722.5 409.7 723.5 427.5C724.5 445.3 725.7 476.5 726.6 494.7C727.5 512.9 728.6 532.5 729.2 541.2C729.8 549.9 730.1 548.5 730.5 549.3C730.9 550.1 731.1 549.4 732.0 546.0C732.9 542.6 735.1 532.4 736.4 528.3C737.7 524.2 739.3 520.7 740.3 520.5C741.3 520.3 741.7 523.1 742.5 527.0C743.3 530.9 744.2 540.0 745.0 545.0C745.8 550.0 746.5 553.6 747.5 558.5C748.5 563.4 750.3 569.2 751.4 575.6C752.5 582.0 753.4 598.7 754.3 598.7C755.2 598.7 756.5 580.6 757.3 575.6C758.1 570.6 758.4 568.2 759.2 567.3C760.0 566.4 761.3 568.5 762.2 569.7C763.1 570.9 764.2 576.9 765.1 574.7C766.0 572.5 767.2 560.8 768.1 556.0C769.0 551.2 769.6 546.4 770.5 544.7C771.4 543.0 772.6 544.0 773.5 545.2C774.4 546.4 775.0 551.3 775.9 552.1C776.8 552.9 778.0 549.1 778.9 550.1C779.8 551.1 780.8 555.8 781.8 558.5C782.8 561.2 784.2 570.1 785.3 566.8C786.4 563.5 787.7 539.5 788.7 537.8C789.7 536.1 790.7 550.7 791.6 556.0C792.5 561.3 793.2 561.0 794.1 570.7C795.0 580.4 796.1 616.4 797.0 616.4C797.9 616.4 798.8 581.8 799.5 570.7C800.2 559.6 800.8 551.0 801.5 547.2C802.2 543.4 803.1 544.6 803.9 547.2C804.7 549.8 805.6 559.8 806.4 563.4C807.2 567.0 808.0 569.8 808.8 569.8C809.6 569.8 810.6 566.0 811.3 563.4C812.0 560.8 812.6 548.5 813.2 553.6C813.8 558.7 814.6 582.5 815.2 595.3C815.8 608.1 816.2 637.5 816.7 633.6C817.2 629.7 817.9 578.6 818.6 570.7C819.3 562.8 820.2 583.1 821.1 584.0C822.0 584.9 823.1 578.3 824.0 576.6C824.9 574.9 826.1 571.8 827.0 573.2C827.9 574.6 828.9 587.5 829.9 585.5C830.9 583.5 832.5 563.9 833.4 560.9C834.3 557.9 834.8 560.5 835.3 566.8C835.8 573.1 836.2 598.8 836.8 600.2C837.4 601.6 838.2 572.2 838.8 575.6C839.4 579.0 839.9 628.4 840.7 621.3C841.5 614.2 842.9 542.7 843.7 531.5C844.5 520.3 845.1 538.1 845.6 551.1C846.1 564.1 846.5 610.5 847.1 612.5C847.7 614.5 848.9 571.0 849.6 563.4C850.3 555.8 850.9 554.6 851.5 564.8C852.1 575.0 852.9 627.8 853.5 627.2C854.1 626.6 854.8 567.6 855.5 560.9C856.2 554.2 857.1 583.9 857.9 585.5C858.7 587.1 859.5 569.5 860.4 570.7C861.3 571.9 862.5 592.0 863.3 592.8C864.1 593.6 864.5 578.0 865.3 575.6C866.1 573.2 867.3 567.9 868.2 578.1C869.1 588.3 869.9 643.0 870.7 639.5C871.5 636.0 872.4 564.6 873.1 556.0C873.8 547.4 874.4 583.9 875.1 585.5C875.8 587.1 876.7 560.3 877.5 565.8C878.3 571.3 879.4 613.6 880.0 619.6C880.6 625.6 880.8 607.2 881.3 603.2C881.8 599.2 882.4 593.6 883.0 594.4C883.6 595.2 884.4 608.1 885.0 608.3C885.6 608.5 886.2 600.2 886.8 595.7C887.4 591.2 888.1 580.0 888.6 580.0C889.1 580.0 889.6 592.6 890.1 595.7C890.6 598.8 891.2 600.2 891.8 599.4C892.4 598.6 893.3 595.4 893.9 590.6C894.5 585.8 895.1 573.3 895.6 569.2C896.1 565.1 896.7 563.1 897.1 564.9C897.5 566.7 898.0 570.1 898.4 580.5C898.8 590.9 899.5 624.9 899.9 629.7C900.3 634.5 900.8 611.2 901.2 610.8C901.6 610.4 902.0 633.6 902.4 627.2C902.8 620.8 903.5 575.5 903.9 570.5C904.3 565.5 904.8 590.7 905.2 595.7C905.6 600.7 906.2 600.8 906.7 602.0C907.2 603.2 907.9 607.2 908.5 603.2C909.1 599.2 909.7 577.6 910.2 576.8C910.7 576.0 911.4 594.6 911.8 598.2C912.2 601.8 912.6 602.2 913.0 599.4C913.4 596.6 914.0 583.6 914.5 580.5C915.0 577.4 915.5 578.6 916.0 580.0C916.5 581.4 917.0 594.6 917.6 589.4C918.2 584.2 919.2 551.1 919.8 547.3C920.4 543.5 921.1 561.3 921.6 565.4C922.1 569.5 922.7 567.8 923.1 573.0C923.5 578.2 924.0 592.4 924.4 598.2C924.8 604.0 925.1 609.5 925.6 609.5C926.1 609.5 926.9 598.0 927.4 598.2C927.9 598.4 928.2 604.3 928.6 610.8C929.0 617.3 929.8 634.6 930.2 639.0C930.6 643.4 930.9 643.2 931.2 638.5C931.5 633.8 931.8 614.3 932.2 609.5C932.6 604.7 933.3 611.9 933.7 608.3C934.1 604.7 934.6 586.0 935.0 586.8C935.4 587.6 935.8 608.1 936.2 613.3C936.6 618.5 937.3 627.3 937.7 619.6C938.1 611.9 938.6 579.6 939.0 565.4C939.4 551.2 939.6 530.6 940.0 530.6C940.4 530.6 940.9 553.8 941.3 565.4C941.7 577.0 942.0 595.7 942.3 603.2C942.6 610.7 942.9 607.6 943.3 612.0C943.7 616.4 944.1 631.2 944.5 631.0C944.9 630.8 945.2 606.2 945.5 610.8C945.8 615.4 946.2 661.8 946.5 660.0C946.8 658.2 947.2 607.5 947.6 599.4C948.0 591.3 948.7 604.0 949.1 609.5C949.5 615.0 949.9 617.6 950.3 633.5C950.7 649.4 951.0 711.8 951.3 709.0C951.6 706.2 951.9 632.3 952.3 615.8C952.7 599.3 953.2 610.1 953.6 605.7C954.0 601.3 954.5 588.1 954.9 588.1C955.3 588.1 956.0 600.3 956.4 605.7C956.8 611.1 957.0 620.5 957.4 622.1C957.8 623.7 958.2 618.8 958.6 615.8C959.0 612.8 959.5 601.6 959.9 603.2C960.3 604.8 960.8 620.3 961.2 625.9C961.6 631.5 961.9 639.3 962.2 638.5C962.5 637.7 962.6 617.1 962.9 620.9C963.2 624.7 963.5 662.1 963.9 662.5C964.3 662.9 964.8 630.9 965.2 623.4C965.6 615.9 965.9 619.9 966.2 615.8C966.5 611.7 966.9 592.5 967.2 597.7C967.5 602.9 967.7 645.7 968.0 648.6C968.3 651.5 968.6 611.0 969.0 615.8C969.4 620.6 969.8 670.2 970.2 678.3C970.6 686.4 971.0 676.0 971.3 666.2C971.6 656.4 971.9 625.2 972.3 617.1C972.7 609.0 973.3 617.6 973.8 615.8C974.3 614.0 974.9 603.7 975.3 605.7C975.7 607.7 976.1 628.6 976.5 628.4C976.9 628.2 977.4 609.5 977.8 604.5C978.2 599.5 978.5 595.1 978.8 596.9C979.1 598.7 979.5 604.4 979.8 615.8C980.1 627.2 980.5 668.8 980.8 668.0C981.1 667.2 981.4 621.6 981.8 610.8C982.2 600.0 982.7 591.5 983.1 600.7C983.5 609.9 984.0 668.4 984.4 668.0C984.8 667.6 985.0 606.6 985.4 598.2C985.8 589.8 986.2 614.2 986.6 615.8C987.0 617.4 987.5 607.5 987.9 608.3C988.3 609.1 988.8 614.9 989.2 620.9C989.6 626.9 989.8 646.1 990.2 646.1C990.6 646.1 990.9 627.6 991.4 620.9C991.9 614.2 992.7 603.1 993.2 604.5C993.7 605.9 994.3 628.7 994.7 629.7C995.1 630.7 995.6 613.0 996.0 610.8C996.4 608.6 997.1 610.6 997.5 615.8C997.9 621.0 998.3 644.8 998.7 643.6C999.1 642.4 999.6 616.2 1000.0 608.3C1000.4 600.4 1001.1 592.8 1001.5 594.4C1001.9 596.0 1002.4 615.4 1002.8 618.4C1003.2 621.4 1003.6 612.9 1004.0 613.3C1004.4 613.7 1004.9 613.6 1005.3 620.9C1005.7 628.2 1006.4 658.4 1006.8 659.2C1007.2 660.0 1007.7 634.5 1008.1 625.9C1008.5 617.3 1008.9 607.3 1009.3 605.7C1009.7 604.1 1010.2 611.0 1010.6 615.8C1011.0 620.6 1011.4 636.0 1011.8 636.0C1012.2 636.0 1012.7 616.5 1013.1 615.8C1013.5 615.1 1014.0 634.7 1014.4 631.5C1014.8 628.3 1015.2 603.3 1015.6 595.7C1016.0 588.1 1016.7 581.4 1017.1 583.8C1017.5 586.2 1017.7 604.1 1018.1 610.8C1018.5 617.5 1018.9 610.2 1019.4 625.9C1019.9 641.6 1020.8 708.6 1021.2 709.0C1021.6 709.4 1021.8 643.3 1022.2 628.4C1022.6 613.5 1023.0 609.3 1023.4 615.8C1023.8 622.3 1024.0 668.0 1024.4 668.8C1024.8 669.6 1025.3 629.2 1025.7 620.9C1026.1 612.6 1026.6 615.9 1027.0 617.1C1027.4 618.3 1027.8 616.5 1028.2 628.4C1028.6 640.3 1028.9 691.5 1029.2 691.5C1029.5 691.5 1029.7 627.1 1030.0 628.4C1030.3 629.7 1030.6 698.6 1031.0 699.8C1031.4 701.0 1031.9 650.4 1032.3 636.0C1032.7 621.6 1032.9 606.7 1033.3 609.5C1033.7 612.3 1034.0 658.2 1034.5 653.6C1035.0 649.0 1035.8 579.7 1036.3 580.5C1036.8 581.3 1037.4 654.1 1037.8 658.7C1038.2 663.3 1038.4 612.3 1038.8 609.5C1039.2 606.7 1039.7 644.8 1040.1 641.0C1040.5 637.2 1041.2 588.0 1041.6 585.6C1042.0 583.2 1042.4 613.2 1042.8 625.9C1043.2 638.6 1043.7 667.8 1044.1 665.0C1044.5 662.2 1045.0 613.3 1045.4 608.3C1045.8 603.3 1046.4 620.1 1046.9 633.5C1047.4 646.9 1048.0 690.0 1048.4 692.0C1048.8 694.0 1049.3 658.3 1049.7 646.1C1050.1 633.9 1050.4 624.5 1050.9 615.8C1051.4 607.1 1052.2 589.9 1052.7 591.9C1053.2 593.9 1053.5 620.9 1053.9 628.4C1054.3 635.9 1054.8 634.3 1055.2 638.5C1055.6 642.7 1056.1 660.5 1056.5 654.9C1056.9 649.3 1057.2 607.6 1057.7 603.2C1058.2 598.8 1059.2 623.4 1059.5 627.2 L1060.5 666.4 L1060.9 621.7 L1061.4 599.4 L1061.8 616.6 L1062.2 695.3 L1062.6 646.0 L1063.0 661.4 L1063.5 633.2 L1063.9 657.5 L1064.3 712.0 L1064.7 698.0 L1065.1 642.1 L1065.6 627.9 L1066.0 661.6 L1066.4 649.9 L1066.8 654.4 L1067.2 631.7 L1067.6 633.0 L1068.0 621.5 L1068.4 623.8 L1068.8 639.1 L1069.2 663.0 L1069.6 668.4 L1070.0 712.0 L1070.4 648.9 L1070.8 629.1 L1071.2 629.4 L1071.6 631.1 L1072.0 648.4 L1072.4 670.6 L1072.8 643.6 L1073.2 670.7 L1073.6 654.8 L1074.0 663.4 L1074.4 679.4 L1074.7 678.3 L1075.1 630.4 L1075.5 616.7 L1075.9 626.8 L1076.3 639.8 L1076.7 616.7 L1077.0 638.2 L1077.4 712.0 L1077.8 640.1 L1078.2 635.3 L1078.6 682.6 L1078.9 633.4 L1079.3 637.7 L1079.7 631.3 L1080.1 613.7 L1080.4 632.5 L1080.8 683.5 L1081.2 675.3 L1081.5 626.1 L1081.9 618.5 L1082.3 628.3 L1082.6 644.1 L1083.0 684.8 L1083.4 652.8 L1083.7 624.0 L1084.1 623.2 L1084.5 638.5 L1084.8 630.8 L1085.2 621.0 L1085.5 631.0 L1085.9 668.3 L1086.2 620.1 L1086.6 628.3 L1087.0 712.0 L1087.3 643.8 L1087.7 626.6 L1088.0 632.0 L1088.4 682.9 L1088.7 646.0 L1089.1 631.6 L1089.4 645.3 L1089.8 682.4 L1090.1 651.7 L1090.5 615.7 L1090.8 610.8 L1091.1 620.4 L1091.5 649.8 L1091.8 628.3 L1092.2 641.7 L1092.5 666.7 L1092.9 698.9 L1093.2 629.8 L1093.5 636.9 L1093.9 655.2 L1094.2 647.8 L1094.5 685.4 L1094.9 630.1 L1095.2 631.5 L1095.5 709.3 L1095.9 628.8 L1096.2 621.4 L1096.5 629.8 L1096.9 638.6 L1097.2 636.6 L1097.5 664.2 L1097.9 712.0 L1098.2 651.0 L1098.5 662.1 L1098.8 666.0 L1099.2 630.1 L1099.5 628.6 L1099.8 690.1 L1100.1 643.9 L1100.5 638.0 L1100.8 623.8 L1101.1 637.8 L1101.4 651.6 L1101.7 627.3 L1102.1 636.7 L1102.4 712.0 L1102.7 684.9 L1103.0 680.8 L1103.3 673.0 L1103.6 648.5 L1103.9 646.0 L1104.3 680.2 L1104.6 678.1 L1104.9 637.7 L1105.2 637.7 L1105.5 689.0 L1105.8 670.1 L1106.1 665.3 L1106.4 654.6 L1106.7 651.5 L1107.0 620.5 L1107.4 644.8 L1107.7 668.8 L1108.0 665.3 L1108.3 643.9 L1108.6 644.8 L1108.9 663.3 L1109.2 643.7 L1109.5 634.7 L1109.8 621.9 L1110.1 625.3 L1110.4 658.0 L1110.7 667.7 L1111.0 694.6 L1111.3 679.6 L1111.6 712.0 L1111.9 687.7 L1112.2 675.9 L1112.5 687.5 L1112.8 710.7 L1113.0 636.6 L1113.3 648.5 L1113.6 712.0 L1113.9 702.6 L1114.2 660.6 L1114.5 650.0 L1114.8 712.0 L1115.1 640.1 L1115.4 671.0 L1115.7 712.0 L1116.0 654.2 L1116.2 657.2 L1116.5 659.1 L1116.8 643.2 L1117.1 712.0 L1117.4 661.9 L1117.7 712.0 L1118.0 693.3 L1118.2 666.8 L1118.5 652.1 L1118.8 649.7 L1119.1 665.0 L1119.4 701.5 L1119.6 687.2 L1119.9 652.8 L1120.2 664.8 L1120.5 669.5 L1120.8 659.5 L1121.0 662.5 L1121.3 655.3 L1121.6 637.9 L1121.9 637.5 L1122.1 677.0 L1122.4 663.3 L1122.7 677.8 L1123.0 678.2 L1123.2 610.6 L1123.5 592.6 L1123.8 610.6 L1124.1 639.8 L1124.3 710.2 L1124.6 620.7 L1124.9 619.9 L1125.1 654.3 L1125.4 692.2 L1125.7 712.0 L1125.9 651.1 L1126.2 636.4 L1126.5 663.4 L1126.7 694.7 L1127.0 692.6 L1127.3 638.0 L1127.5 630.2 L1127.8 641.4 L1128.1 620.1 L1128.3 635.5 L1128.6 632.7 L1128.9 614.7 L1129.1 618.7 L1129.4 632.6 L1129.6 633.6 L1129.9 628.8 L1130.2 655.2 L1130.4 692.7 L1130.7 623.1 L1130.9 620.9 L1131.2 637.2 L1131.5 688.5 L1131.7 640.4 L1132.0 630.1 L1132.2 619.6 L1132.5 629.8 L1132.7 712.0 L1133.0 629.3 L1133.2 620.2 L1133.5 617.8 L1133.7 607.7 L1134.0 627.2 L1134.3 629.2 L1134.5 650.5 L1134.8 609.5 L1135.0 605.0 L1135.3 662.7 L1135.5 675.5 L1135.8 661.6 L1136.0 675.9 L1136.3 620.8 L1136.5 615.7 L1136.8 631.7 L1137.0 658.3 L1137.2 682.1 L1137.5 684.0 L1137.7 634.9 L1138.0 675.3 L1138.2 623.9 L1138.5 609.2 L1138.7 625.1 L1139.0 648.1 L1139.2 650.2 L1139.4 645.0 L1139.7 679.7 L1139.9 678.3 L1140.2 654.9 L1140.4 664.2 L1140.7 646.9 L1140.9 636.6 L1141.1 631.3 L1141.4 669.1 L1141.6 660.3 L1141.9 645.2 L1142.1 678.0 L1142.3 712.0 L1142.6 634.8 L1142.8 649.8 L1143.0 700.4 L1143.3 669.3 L1143.5 628.4 L1143.8 653.6 L1144.0 712.0 L1144.2 712.0 L1144.5 709.8 L1144.7 696.6 L1144.9 712.0 L1145.2 633.5 L1145.4 633.8 L1145.6 677.4 L1145.9 626.1 L1146.1 621.3 L1146.3 680.3 L1146.5 634.1 L1146.8 636.6 L1147.0 651.9 L1147.2 625.1 L1147.5 624.7 L1147.7 626.1 L1147.9 661.2 L1148.2 712.0 L1148.4 688.7 L1148.6 663.0 L1148.8 631.2 L1149.1 632.8 L1149.3 625.1 L1149.5 631.2 L1149.7 628.7 L1150.0 637.0 L1150.2 664.8 L1150.4 611.0 L1150.6 608.5 L1150.9 613.0 L1151.1 595.0 L1151.3 613.0 L1151.5 660.3 L1151.8 636.3 L1152.0 638.5 L1152.2 640.2 L1152.4 631.2 L1152.6 626.6 L1152.9 639.7 L1153.1 712.0 L1153.3 671.7 L1153.5 666.2 L1153.7 712.0 L1154.0 674.6 L1154.2 640.7 L1154.4 649.2 L1154.6 712.0 L1154.8 685.0 L1155.1 667.3 L1155.3 638.0 L1155.5 655.2 L1155.7 645.9 L1155.9 625.8 L1156.1 633.6 L1156.3 636.3 L1156.6 642.3 L1156.8 672.5 L1157.0 693.3 L1157.2 686.5 L1157.4 650.5 L1157.6 647.2 L1157.8 644.5 L1158.1 650.1 L1158.3 712.0 L1158.5 674.5 L1158.7 642.8 L1158.9 623.5 L1159.1 622.9 L1159.3 623.7 L1159.5 638.1 L1159.7 630.4 L1160.0 632.0 L1160.2 639.4 L1160.4 632.3 L1160.6 712.0 L1160.8 619.6 L1161.0 625.1 L1161.2 673.8 L1161.4 680.2 L1161.6 693.7 L1161.8 637.6 L1162.0 639.0 L1162.2 657.8 L1162.4 661.6 L1162.7 658.3 L1162.9 636.6 L1163.1 665.8 L1163.3 626.2 L1163.5 634.7 L1163.7 682.1 L1163.9 691.5 L1164.1 665.3 L1164.3 644.4 L1164.5 620.7 L1164.7 620.4 L1164.9 659.2 L1165.1 638.7 L1165.3 649.3 L1165.5 712.0 L1165.7 682.9 L1165.9 673.0 L1166.1 632.0 L1166.3 678.4 L1166.5 636.8 L1166.7 643.4 L1166.9 669.6 L1167.1 662.9 L1167.3 639.6 L1167.5 646.1 L1167.7 709.1 L1167.9 712.0 L1168.1 656.9 L1168.3 680.4 L1168.5 648.8 L1168.7 681.8 L1168.9 647.5 L1169.1 638.5 L1169.3 637.5 L1169.5 686.3 L1169.7 637.6 L1169.9 635.7 L1170.1 637.9 L1170.3 675.9 L1170.4 651.2 L1170.6 667.3 L1170.8 663.0 L1171.0 635.8 L1171.2 641.8 L1171.4 655.6 L1171.6 660.0 L1171.8 712.0 L1172.0 704.9 L1172.2 712.0 L1172.4 712.0 L1172.6 661.8 L1172.8 661.4 L1173.0 651.1 L1173.1 657.8 L1173.3 669.9 L1173.5 647.7 L1173.7 652.4 L1173.9 678.0 L1174.1 648.9 L1174.3 638.2 L1174.5 686.7 L1174.7 695.4 L1174.8 647.7 L1175.0 636.1 L1175.2 623.4 L1175.4 631.8 L1175.6 661.2 L1175.8 673.3 L1176.0 681.7 L1176.2 682.1 L1176.3 669.5 L1176.5 678.2 L1176.7 654.6 L1176.9 685.9 L1177.1 658.5 L1177.3 638.4 L1177.5 652.0 L1177.6 693.8 L1177.8 686.9 L1178.0 641.6 L1178.2 624.2 L1178.4 640.4 L1178.6 712.0 L1178.7 654.7 L1178.9 651.9 L1179.1 638.9 L1179.3 649.5 L1179.5 699.6 L1179.7 664.1 L1179.8 712.0 L1180.0 650.5 L1180.2 641.0 L1180.4 642.2 L1180.6 667.9 L1180.7 667.6 L1180.9 712.0 L1181.1 673.4 L1181.3 676.7 L1181.5 665.9 L1181.6 668.4 L1181.8 644.9 L1182.0 630.5 L1182.2 665.8 L1182.4 640.6 L1182.5 649.4 L1182.7 642.7 L1182.9 639.3 L1183.1 661.4 L1183.2 640.7 L1183.4 653.1 L1183.6 654.8 L1183.8 667.8 L1184.0 712.0 L1184.1 637.2 L1184.3 623.6 L1184.5 643.7 L1184.7 712.0 L1184.8 668.6 L1185.0 652.7 L1185.2 660.8 L1185.4 657.8 L1185.5 666.0 L1185.7 641.0 L1185.9 699.7 L1186.1 663.3 L1186.2 639.9 L1186.4 642.6 L1186.6 650.6 L1186.7 669.8 L1186.9 656.4 L1187.1 668.2 L1187.3 689.1 L1187.4 676.7 L1187.6 680.0 L1187.8 643.6 L1188.0 658.5 L1188.1 683.7 L1188.3 693.2 L1188.5 694.9 L1188.6 686.1 L1188.8 712.0 L1189.0 681.5 L1189.1 712.0 L1189.3 670.4 L1189.5 652.5 L1189.7 680.4 L1189.8 679.2 L1190.0 653.4 L1190.2 648.5 L1190.3 632.6 L1190.5 645.5 L1190.7 690.7 L1190.8 672.1 L1191.0 652.0 L1191.2 641.7 L1191.3 640.6 L1191.5 657.0 L1191.7 694.3 L1191.8 674.9 L1192.0 642.7 L1192.2 642.4 L1192.3 638.2 L1192.5 652.7 L1192.7 708.0 L1192.8 687.1 L1193.0 712.0 L1193.2 682.5 L1193.3 712.0 L1193.5 685.2 L1193.7 656.3 L1193.8 694.8 L1194.0 685.6 L1194.1 679.6 L1194.3 649.9 L1194.5 649.2 L1194.6 712.0 L1194.8 676.2 L1195.0 654.3 L1195.1 670.4 L1195.3 712.0 L1195.5 712.0 L1195.6 712.0 L1195.8 712.0 L1195.9 712.0 L1196.1 707.0 L1196.3 690.5 L1196.4 656.2 L1196.6 656.5 L1196.7 680.9 L1196.9 661.9 L1197.1 658.5 L1197.2 648.8 L1197.4 654.4 L1197.5 663.2 L1197.7 712.0 L1197.9 659.7 L1198.0 688.0 L1198.2 658.9 L1198.3 660.3 L1198.5 653.9 L1198.7 660.1 L1198.8 705.9 L1199.0 656.4 L1199.1 675.0 L1199.3 712.0 L1199.5 654.0 L1199.6 648.6 L1199.8 673.3 L1199.9 704.7 L1200.1 650.7 L1200.3 708.4 L1200.7 645.6 L1201.0 665.9 L1201.3 641.2 L1201.6 712.0 L1202.0 652.7 L1202.2 712.0 L1202.6 663.5 L1202.8 678.6 L1203.2 671.4 L1203.4 712.0 L1203.8 674.5 L1204.1 712.0 L1204.4 648.9 L1204.7 688.5 L1205.0 654.8 L1205.3 712.0 L1205.6 661.8 L1205.9 712.0 L1206.2 654.7 L1206.5 710.5 L1206.8 682.3 L1207.1 712.0 L1207.4 665.7 L1207.7 712.0 L1208.0 664.9 L1208.3 712.0 L1208.6 664.1 L1208.9 712.0 L1209.2 654.4 L1209.4 687.5 L1209.8 657.9 L1210.0 710.1 L1210.4 633.9 L1210.6 650.8 L1210.9 635.8 L1211.2 667.3 L1211.5 657.6 L1211.8 662.3 L1212.1 651.6 L1212.4 653.3 L1212.7 637.0 L1212.9 650.5 L1213.3 633.9 L1213.5 648.4 L1213.8 644.6 L1214.1 663.3 L1214.4 655.6 L1214.6 688.0 L1215.0 644.3 L1215.2 712.0 L1215.5 656.8 L1215.8 696.9 L1216.1 670.6 L1216.3 692.6 L1216.6 683.6 L1216.9 707.8 L1217.2 656.8 L1217.4 698.8 L1217.7 652.1 L1218.0 712.0 L1218.3 637.4 L1218.6 662.0 L1218.9 643.1 L1219.1 692.3 L1219.4 651.4 L1219.6 712.0 L1219.9 658.0 L1220.2 712.0 L1220.5 636.9 L1220.7 712.0 L1221.0 642.5 L1221.3 699.4 L1221.6 640.8 L1221.8 675.0 L1222.1 656.6 L1222.4 703.2 L1222.6 632.3 L1222.9 690.8 L1223.2 656.2 L1223.4 712.0 L1223.7 646.1 L1224.0 682.2 L1224.2 659.5 L1224.5 695.4 L1224.8 657.8 L1225.0 686.9 L1225.3 645.1 L1225.5 669.0 L1225.8 627.0 L1226.1 656.2 L1226.3 656.2 L1226.6 689.4 L1226.8 651.1 L1227.1 712.0 L1227.4 641.3 L1227.6 676.9 L1227.9 649.4 L1228.1 669.4 L1228.4 666.0 L1228.6 708.0 L1228.9 671.6 L1229.2 712.0 L1229.4 652.6 L1229.7 685.7 L1229.9 657.8 L1230.2 712.0 L1230.4 676.9 L1230.7 687.9 L1230.9 664.8 L1231.2 712.0 L1231.4 676.3 L1231.7 708.4 L1231.9 658.5 L1232.2 712.0 L1232.6 661.5 L1232.8 712.0 L1233.2 652.8 L1233.4 683.4 L1233.8 653.3 L1234.0 686.9 L1234.4 618.0 L1234.7 666.5 L1235.0 651.3 L1235.3 712.0 L1235.6 648.3 L1235.9 669.9 L1236.2 674.1 L1236.5 712.0 L1236.8 669.2 L1237.1 708.3 L1237.4 648.4 L1237.7 712.0 L1238.0 650.9 L1238.3 698.7 L1238.6 667.1 L1238.9 712.0 L1239.2 661.9 L1239.5 712.0 L1239.8 665.4 L1240.1 700.2 L1240.4 653.9 L1240.7 685.1 L1241.0 644.0 L1241.2 697.3 L1241.6 663.4 L1241.8 712.0 L1242.2 678.6 L1242.4 712.0 L1242.7 657.6 L1243.0 697.5 L1243.3 659.4 L1243.6 701.0 L1243.9 655.2 L1244.1 712.0 L1244.5 643.2 L1244.7 712.0 L1245.0 667.5 L1245.3 712.0 L1245.6 653.8 L1245.8 712.0 L1246.2 653.5 L1246.4 708.9 L1246.7 650.9 L1247.0 712.0 L1247.3 655.5 L1247.5 712.0 L1247.8 665.0 L1248.1 712.0 L1248.4 608.5 L1248.6 712.0 L1248.9 645.7 L1249.2 712.0 L1249.5 663.1 L1249.7 697.6 L1250.0 685.7 L1250.3 712.0 L1250.6 661.7 L1250.8 707.7 L1251.1 664.9 L1251.4 712.0 L1251.7 660.6 L1251.9 712.0 L1252.2 659.5 L1252.5 711.2 L1252.8 651.3 L1253.0 712.0 L1253.3 665.1 L1253.5 712.0 L1253.8 669.6 L1254.1 700.7 L1254.4 666.3 L1254.6 712.0 L1254.9 656.6 L1255.1 712.0 L1255.4 662.2 L1255.7 712.0 L1255.9 663.1 L1256.2 708.3 L1256.5 650.3 L1256.7 697.7 L1257.0 671.7 L1257.2 712.0 L1257.5 660.2 L1257.8 712.0 L1258.0 670.7 L1258.3 712.0 L1258.5 665.1 L1258.8 712.0 L1259.1 673.6 L1259.3 712.0 L1259.6 693.0 L1259.8 712.0 L1260.1 624.0 L1260.3 712.0 L1260.6 679.6 L1260.8 712.0 L1261.1 676.3 L1261.4 712.0 L1261.6 673.7 L1261.9 712.0 L1262.1 670.6 L1262.4 712.0 L1262.6 668.2 L1262.9 712.0 L1263.2 657.5 L1263.5 712.0 L1263.8 670.9 L1264.1 695.9 L1264.4 674.2 L1264.7 712.0 L1265.0 679.0 L1265.2 712.0 L1265.6 663.8 L1265.8 712.0 L1266.2 681.2 L1266.4 712.0 L1266.8 676.9 L1267.0 712.0 L1267.3 661.3 L1267.6 710.2 L1267.9 666.0 L1268.2 712.0 L1268.5 669.3 L1268.7 712.0 L1269.1 676.8 L1269.3 712.0 L1269.6 662.9 L1269.9 712.0 L1270.2 661.4 L1270.5 685.9 L1270.8 681.1 L1271.0 712.0 L1271.3 657.1 L1271.6 702.7 L1271.9 647.4 L1272.2 698.3 L1272.5 677.2 L1272.7 712.0 L1273.0 678.1 L1273.3 712.0 L1273.6 663.4 L1273.8 712.0 L1274.1 667.6 L1274.4 705.8 L1274.7 657.0 L1274.9 712.0 L1275.2 653.6 L1275.5 683.1 L1275.8 667.6 L1276.0 712.0 L1276.3 661.6 L1276.6 712.0 L1276.9 665.1 L1277.1 712.0 L1277.4 654.2 L1277.7 677.3 L1278.0 646.7 L1278.2 697.9 L1278.5 662.4 L1278.7 709.4 L1279.0 666.7 L1279.3 699.2 L1279.6 656.2 L1279.8 712.0 L1280.1 669.6 L1280.3 700.3 L1280.6 675.5 L1280.9 712.0 L1281.1 656.0 L1281.4 712.0 L1281.7 663.4 L1281.9 712.0 L1282.2 680.5 L1282.4 690.1 L1282.7 665.3 L1283.0 710.6 L1283.2 685.6 L1283.5 712.0 L1283.7 661.1 L1284.0 712.0 L1284.3 649.7 L1284.5 712.0 L1284.8 671.0 L1285.0 706.3 L1285.3 656.8 L1285.5 712.0 L1285.8 669.9 L1286.0 712.0 L1286.3 659.6 L1286.6 692.1 L1286.8 666.2 L1287.1 712.0 L1287.3 669.7 L1287.6 712.0 L1287.8 665.4 L1288.1 712.0 L1288.3 667.7 L1288.6 712.0 L1288.9 684.9 L1289.1 712.0 L1289.5 673.8 L1289.7 710.7 L1290.0 675.3 L1290.3 712.0 L1290.6 652.9 L1290.9 712.0 L1291.2 672.1 L1291.4 712.0 L1291.8 678.5 L1292.0 712.0 L1292.3 660.5 L1292.6 688.9 L1292.9 658.2 L1293.1 712.0 L1293.5 662.4 L1293.7 704.4 L1294.0 669.6 L1294.3 712.0 L1294.6 667.0 L1294.8 699.2 L1295.1 659.7 L1295.4 701.5 L1295.7 668.5 L1295.9 712.0 L1296.2 662.0 L1296.5 712.0 L1296.8 660.7 L1297.0 712.0 L1297.3 675.5 L1297.6 712.0 L1297.9 681.5 L1298.1 712.0 L1298.4 674.2 L1298.7 712.0 L1299.0 668.7 L1299.2 705.9 L1299.5 678.0 L1299.7 712.0 L1300.0 683.8 L1300.3 712.0 L1300.6 660.4 L1300.8 702.5 L1301.1 680.2 L1301.4 712.0 L1301.6 681.1 L1301.9 712.0 L1302.2 666.7 L1302.4 712.0 L1302.7 669.6 L1302.9 712.0 L1303.2 682.1 L1303.5 712.0 L1303.7 671.5 L1304.0 712.0 L1304.3 659.6 L1304.5 712.0 L1304.8 679.2 L1305.0 704.9 L1305.3 680.0 L1305.5 712.0 L1305.8 671.0 L1306.1 712.0 L1306.3 676.4 L1306.6 712.0 L1306.8 648.5 L1307.1 687.5 L1307.3 672.6 L1307.6 712.0 L1307.8 661.8 L1308.1 712.0 L1308.3 673.3 L1308.6 712.0 L1308.9 665.3 L1309.1 687.4 L1309.4 659.4 L1309.6 695.9 L1309.9 659.3 L1310.2 701.0 L1310.5 673.7 L1310.7 712.0 L1311.1 661.1 L1311.3 712.0 L1311.6 657.0 L1311.9 712.0 L1312.2 672.3 L1312.4 712.0 L1312.7 661.8 L1313.0 706.6 L1313.3 673.3 L1313.6 712.0 L1313.9 668.1 L1314.1 712.0 L1314.4 664.1 L1314.7 712.0 L1315.0 668.8 L1315.2 712.0 L1315.5 666.5 L1315.8 712.0 L1316.1 667.2 L1316.3 712.0 L1316.6 673.5 L1316.8 712.0 L1317.1 672.0 L1317.4 712.0 L1317.7 683.9 L1317.9 712.0 L1318.2 700.8 L1318.5 712.0 L1318.8 655.3 L1319.0 712.0 L1319.3 667.5 L1319.5 712.0 L1319.8 679.4 L1320.1 712.0 L1320.3 680.9 L1320.6 712.0 L1320.9 688.9 L1321.1 712.0 L1321.4 662.7 L1321.7 712.0 L1321.9 673.5 L1322.2 712.0 L1322.4 667.2 L1322.7 712.0 L1323.0 674.9 L1323.2 712.0 L1323.5 667.1 L1323.7 712.0 L1324.0 679.9 L1324.2 712.0 L1324.5 661.0 L1324.8 712.0 L1325.0 670.3 L1325.3 712.0 L1325.5 672.5 L1325.8 712.0 L1326.0 667.8 L1326.3 708.1 L1326.6 678.9 L1326.8 712.0 L1327.1 688.0 L1327.3 712.0 L1327.6 681.9 L1327.8 712.0 L1328.1 682.8 L1328.3 712.0 L1328.6 662.1 L1328.9 712.0 L1329.2 670.8 L1329.4 712.0 L1329.7 672.6 L1330.0 712.0 L1330.3 675.7 L1330.5 712.0 L1330.8 675.8 L1331.1 712.0 L1331.4 679.0 L1331.6 712.0 L1331.9 684.7 L1332.2 712.0 L1332.5 678.7 L1332.7 712.0 L1333.0 698.8 L1333.3 712.0 L1333.6 672.6 L1333.8 712.0 L1334.1 686.1 L1334.4 712.0 L1334.7 661.6 L1334.9 712.0 L1335.2 672.8 L1335.4 712.0 L1335.7 686.2 L1336.0 712.0 L1336.3 660.1 L1336.5 712.0 L1336.8 669.8 L1337.0 712.0 L1337.3 671.5 L1337.6 712.0 L1337.8 668.1 L1338.1 712.0 L1338.4 663.5 L1338.6 712.0 L1338.9 690.3 L1339.1 712.0 L1339.4 663.4 L1339.6 712.0 L1339.9 696.5 L1340.2 712.0 L1340.4 674.9 L1340.7 712.0 L1340.9 666.8 L1341.2 712.0 L1341.5 683.8 L1341.7 712.0 L1342.0 680.4 L1342.2 712.0 L1342.5 676.3 L1342.7 712.0 L1343.0 684.9 L1343.2 712.0 L1343.5 670.6 L1343.7 712.0 L1344.0 670.3 L1344.2 712.0 L1344.5 665.5 L1344.7 712.0 L1345.0 670.7 L1345.3 712.0 L1345.6 668.3 L1345.8 712.0 L1346.1 663.9 L1346.4 712.0 L1346.7 686.2 L1346.9 712.0 L1347.2 676.7 L1347.5 712.0 L1347.8 668.2 L1348.0 712.0 L1348.3 682.5 L1348.6 712.0 L1348.9 687.0 L1349.1 712.0 L1349.4 681.4 L1349.6 712.0 L1349.9 665.5 L1350.2 712.0 L1350.5 685.2 L1350.7 712.0 L1351.0 682.5 L1351.2 712.0 L1351.5 666.1 L1351.8 712.0 L1352.1 679.4 L1352.3 712.0 L1352.6 683.9 L1352.8 712.0 L1353.1 665.6 L1353.4 712.0 L1353.6 666.9 L1353.9 712.0 L1354.1 684.1 L1354.4 712.0 L1354.7 677.1 L1354.9 712.0 L1355.2 676.1 L1355.4 712.0 L1355.7 675.7 L1355.9 712.0 L1356.2 647.2 L1356.4 712.0 L1356.7 673.5 L1357.0 712.0 L1357.2 670.2 L1357.5 712.0 L1357.7 681.2 L1358.0 712.0 L1358.2 686.9 L1358.5 712.0 L1358.7 686.0 L1359.0 712.0 L1359.2 681.4 L1359.5 712.0 L1359.8 675.4 L1360.0 712.0 L1360.3 670.3 L1360.6 712.0 L1360.9 676.9 L1361.1 712.0 L1361.4 674.8 L1361.7 712.0 L1362.0 701.7 L1362.2 712.0 L1362.5 665.2 L1362.7 712.0 L1363.0 679.0 L1363.3 712.0 L1363.6 686.0 L1363.8 712.0 L1364.1 676.0 L1364.3 712.0 L1364.6 664.2 L1364.9 712.0 L1365.1 674.8 L1365.4 712.0 L1365.7 688.8 L1365.9 712.0 L1366.2 673.7 L1366.4 712.0 L1366.7 682.5 L1367.0 712.0 L1367.2 672.8 L1367.5 712.0 L1367.8 675.8 L1368.0 712.0 L1368.3 684.5 L1368.5 712.0 L1368.8 680.2 L1369.0 712.0 L1369.3 667.7 L1369.5 712.0 L1369.8 691.8 L1370.1 712.0 L1370.3 679.8 L1370.6 712.0 L1370.8 674.7 L1371.1 712.0 L1371.3 688.3 L1371.6 712.0 L1371.8 686.7 L1372.1 712.0 L1372.3 671.2 L1372.6 712.0 L1372.9 677.8 L1373.1 712.0 L1373.4 693.9 L1373.7 712.0 L1374.0 681.4 L1374.2 712.0 L1374.5 691.4 L1374.7 712.0 L1375.0 690.1 L1375.3 712.0 L1375.6 682.7 L1375.8 712.0 L1376.1 684.1 L1376.3 712.0 L1376.6 674.5 L1376.9 712.0 L1377.2 674.9 L1377.4 712.0 L1377.7 673.9 L1377.9 712.0 L1378.2 679.0 L1378.5 712.0 L1378.7 684.1 L1379.0 712.0 L1379.2 673.2 L1379.5 712.0 L1379.8 681.6 L1380.0 712.0 L1380.3 683.6 L1380.5 712.0 L1380.8 676.3 L1381.0 712.0 L1381.3 676.4 L1381.6 712.0 L1381.8 689.6 L1382.1 712.0 L1382.3 679.1 L1382.6 712.0 L1382.8 683.1 L1383.1 712.0 L1383.3 668.7 L1383.6 712.0 L1383.8 676.1 L1384.1 712.0 L1384.3 676.0 L1384.6 712.0 L1384.9 671.9 L1385.1 712.0 L1385.4 679.7 L1385.7 712.0 L1386.0 681.3 L1386.2 712.0 L1386.5 682.2 L1386.7 712.0 L1387.0 677.3 L1387.3 712.0 L1387.6 670.1 L1387.8 712.0 L1388.1 671.1 L1388.3 712.0 L1388.6 672.9 L1388.9 712.0 L1389.1 692.5 L1389.4 712.0 L1389.7 670.4 L1389.9 712.0 L1390.2 682.8 L1390.4 712.0 L1390.7 688.2 L1390.9 712.0 L1391.2 682.7 L1391.5 712.0 L1391.7 678.2 L1392.0 712.0 L1392.2 687.5 L1392.5 712.0 L1392.8 690.8 L1393.0 712.0 L1393.3 686.1 L1393.5 712.0 L1393.8 692.7 L1394.0 712.0 L1394.3 689.8 L1394.5 712.0 L1394.8 675.0 L1395.0 712.0 L1395.3 665.2 L1395.5 712.0 L1395.8 681.1 L1396.0 712.0 L1396.3 687.8 L1396.6 712.0 L1396.9 694.3 L1397.1 712.0 L1397.4 698.3 L1397.6 712.0 L1397.9 679.6 L1398.2 712.0 L1398.4 684.2 L1398.7 712.0 L1399.0 671.1 L1399.2 712.0 L1399.5 686.1 L1399.7 712.0 L1400.0 675.0 L1400.3 712.0 L1400.5 689.1 L1400.8 712.0 L1401.1 683.8 L1401.3 712.0 L1401.6 687.5 L1401.8 712.0 L1402.1 676.9 L1402.3 712.0 L1402.6 696.1 L1402.8 712.0 L1403.1 686.9 L1403.4 712.0 L1403.6 680.3 L1403.9 712.0 L1404.1 685.8 L1404.4 712.0 L1404.6 693.9 L1404.9 712.0 L1405.1 685.9 L1405.4 712.0 L1405.6 675.3 L1405.9 712.0 L1406.2 683.4 L1406.4 712.0 L1406.7 689.7 L1407.0 712.0 L1407.2 680.9 L1407.5 712.0 L1407.8 686.5 L1408.0 712.0 L1408.3 677.7 L1408.5 712.0 L1408.8 686.8 L1409.1 712.0 L1409.3 680.4 L1409.6 712.0 L1409.9 679.2 L1410.1 712.0 L1410.4 674.6 L1410.6 712.0 L1410.9 689.1 L1411.2 712.0 L1411.4 689.5 L1411.7 712.0 L1411.9 677.0 L1412.2 712.0 L1412.4 702.5 L1412.7 712.0 L1413.0 657.3 L1413.2 712.0 L1413.5 689.0 L1413.7 712.0 L1414.0 704.2 L1414.2 712.0 L1414.5 687.0 L1414.7 712.0 L1415.0 688.0 L1415.2 712.0 L1415.5 690.8 L1415.7 712.0 L1416.0 687.8 L1416.3 712.0 L1416.5 687.1 L1416.8 712.0 L1417.1 682.3 L1417.3 712.0 L1417.6 683.8 L1417.8 712.0 L1418.1 684.7 L1418.4 712.0 L1418.6 694.5 L1418.9 712.0 L1419.2 692.9 L1419.4 712.0 L1419.7 681.0 L1419.9 712.0 L1420.2 690.1 L1420.4 712.0 L1420.7 688.1 L1421.0 712.0 L1421.2 677.8 L1421.5 712.0 L1421.7 684.1 L1422.0 712.0 L1422.2 677.1 L1422.5 712.0 L1422.7 685.0 L1423.0 712.0 L1423.3 686.0 L1423.5 712.0 L1423.8 667.0 L1424.0 712.0 L1424.3 671.7 L1424.5 712.0 L1424.8 678.7 L1425.0 712.0 L1425.3 678.8 L1425.6 712.0 L1425.8 684.2 L1426.1 712.0 L1426.4 692.0 L1426.6 712.0 L1426.9 693.9 L1427.1 712.0 L1427.4 687.9 L1427.7 712.0 L1427.9 694.1 L1428.2 712.0 L1428.4 686.3 L1428.7 712.0 L1429.0 689.8 L1429.2 712.0 L1429.5 686.6 L1429.7 712.0 L1430.0 689.0 L1430.2 712.0 L1430.5 689.3 L1430.7 712.0 L1431.0 690.9 L1431.3 712.0 L1431.5 692.1 L1431.8 712.0 L1432.0 689.1 L1432.3 712.0 L1432.5 690.3 L1432.8 712.0 L1433.0 684.0 L1433.3 712.0 L1433.5 692.5 L1433.8 712.0 L1434.1 686.7 L1434.3 712.0 L1434.6 688.6 L1434.8 712.0 L1435.1 686.8 L1435.4 712.0 L1435.6 690.3 L1435.9 712.0 L1436.2 685.2 L1436.4 712.0 L1436.7 692.5 L1436.9 712.0 L1437.2 690.3 L1437.4 712.0 L1437.7 697.0 L1437.9 712.0 L1438.2 688.3 L1438.5 712.0 L1438.7 683.4 L1439.0 712.0 L1439.2 704.2 L1439.5 712.0 L1439.7 690.6 L1440.0 712.0 L1440.2 686.2 L1440.5 712.0 L1440.7 682.3 L1441.0 712.0 L1441.3 682.6 L1441.5 712.0 L1441.8 700.1 L1442.0 712.0 L1442.3 693.8 L1442.6 712.0 L1442.8 693.0 L1443.1 712.0 L1443.3 691.8 L1443.6 712.0 L1443.9 691.5 L1444.1 712.0 L1444.4 694.7 L1444.6 712.0 L1444.9 687.3 L1445.1 712.0 L1445.4 691.1 L1445.7 712.0 L1445.9 693.8 L1446.2 712.0 L1446.4 700.4 L1446.7 712.0 L1446.9 697.1 L1447.2 712.0 L1447.4 683.2 L1447.7 712.0 L1447.9 695.8 L1448.2 712.0 L1448.4 683.3 L1448.7 712.0 L1449.0 681.6 L1449.2 712.0 L1449.5 694.3 L1449.7 712.0 L1450.0 711.5 L1450.2 712.0 L1450.5 689.6 L1450.8 712.0 L1451.0 697.6 L1451.3 712.0 L1451.6 689.9 L1451.8 712.0 L1452.1 691.5 L1452.3 712.0 L1452.6 679.9 L1452.8 712.0 L1453.1 696.4 L1453.3 712.0 L1453.6 688.0 L1453.8 712.0 L1454.1 677.4 L1454.3 712.0 L1454.6 689.6 L1454.9 712.0 L1455.1 701.4 L1455.4 712.0 L1455.6 684.8 L1455.9 712.0 L1456.1 690.5 L1456.4 712.0 L1456.6 692.5 L1456.9 712.0 L1457.2 696.0 L1457.4 712.0 L1457.7 677.0 L1457.9 712.0 L1458.2 696.1 L1458.5 712.0 L1458.7 687.6 L1459.0 712.0 L1459.2 687.5 L1459.5 712.0 L1459.7 692.3 L1460.0 712.0 L1460.2 694.6 L1460.5 712.0 L1460.8 688.0 L1461.0 712.0 L1461.3 685.6 L1461.5 712.0 L1461.8 697.4 L1462.0 712.0 L1462.3 684.1 L1462.5 712.0 L1462.8 678.5 L1463.0 712.0 L1463.3 689.4 L1463.6 712.0 L1463.8 696.7 L1464.1 712.0 L1464.3 689.7 L1464.6 712.0 L1464.9 667.4 L1465.1 712.0 L1465.4 684.1 L1465.6 712.0 L1465.9 692.5 L1466.1 712.0 L1466.4 691.7 L1466.6 712.0 L1466.9 687.2 L1467.1 712.0 L1467.4 697.0 L1467.6 712.0 L1467.9 679.3 L1468.2 712.0 L1468.4 692.6 L1468.7 712.0 L1468.9 700.2 L1469.2 712.0 L1469.4 695.9 L1469.7 712.0 L1469.9 696.7 L1470.2 712.0 L1470.5 684.8 L1470.7 712.0 L1471.0 694.7 L1471.2 712.0 L1471.5 700.7 L1471.7 712.0 L1472.0 689.5 L1472.2 712.0 L1472.5 688.5 L1472.8 712.0 L1473.0 691.8 L1473.3 712.0 L1473.5 691.6 L1473.8 712.0 L1474.0 691.9 L1474.3 712.0 L1474.5 685.2 L1474.8 712.0 L1475.0 707.2 L1475.3 712.0 L1475.5 694.1 L1475.8 712.0 L1476.1 704.0 L1476.3 712.0 L1476.6 700.7 L1476.8 712.0 L1477.1 697.7 L1477.3 712.0 L1477.6 692.1 L1477.9 712.0 L1478.1 684.1 L1478.4 712.0 L1478.6 681.8 L1478.9 712.0 L1479.1 684.4 L1479.4 712.0 L1479.6 688.1 L1479.9 712.0 L1480.1 690.6 L1480.4 712.0 L1480.6 689.9 L1480.9 712.0 L1481.2 695.3 L1481.4 712.0 L1481.7 688.4 L1481.9 712.0 L1482.2 684.8 L1482.4 712.0 L1482.7 696.4 L1483.0 712.0 L1483.2 702.2 L1483.5 712.0 L1483.7 686.2 L1484.0 712.0 L1484.2 695.7 L1484.5 712.0 L1484.8 695.7 L1485.0 712.0 L1485.3 690.6 L1485.5 712.0 L1485.8 682.3 L1486.0 712.0 L1486.3 691.8 L1486.5 712.0 L1486.8 693.8 L1487.0 712.0 L1487.3 693.1 L1487.6 712.0 L1487.8 691.2 L1488.1 712.0 L1488.3 701.4 L1488.6 712.0 L1488.8 700.8 L1489.1 712.0 L1489.4 703.6 L1489.6 712.0 L1489.9 693.6 L1490.1 712.0 L1490.4 694.2 L1490.6 712.0 L1490.9 700.1 L1491.1 712.0 L1491.4 703.8 L1491.6 712.0 L1491.9 700.8 L1492.1 712.0 L1492.4 695.9 L1492.6 712.0 L1492.9 701.7 L1493.2 712.0 L1493.4 695.8 L1493.7 712.0 L1493.9 693.6 L1494.2 712.0 L1494.4 700.0 L1494.7 712.0 L1495.0 701.6 L1495.2 712.0 L1495.5 707.4 L1495.7 712.0 L1496.0 690.4 L1496.2 712.0 L1496.5 705.3 L1496.7 712.0 L1497.0 699.0 L1497.2 712.0 L1497.5 700.0 L1497.7 712.0 L1498.0 703.0 L1498.3 712.0 L1498.5 688.6 L1498.8 712.0 L1499.0 694.5 L1499.3 712.0 L1499.5 689.0 L1499.8 712.0 L1500.1 696.5 L1500.3 712.0 L1500.6 685.2 L1500.8 712.0 L1501.1 695.4 L1501.3 712.0 L1501.6 684.3 L1501.8 712.0 L1502.1 694.8 L1502.3 712.0 L1502.6 697.8 L1502.8 712.0 L1503.1 696.7 L1503.4 712.0 L1503.6 711.1 L1503.9 712.0 L1504.1 694.7 L1504.4 712.0 L1504.6 702.5 L1504.9 712.0 L1505.1 682.7 L1505.4 712.0 L1505.7 696.0 L1505.9 712.0 L1506.2 700.7 L1506.4 712.0 L1506.7 702.0 L1506.9 712.0 L1507.2 684.3 L1507.4 712.0 L1507.7 697.1 L1507.9 712.0 L1508.2 700.5 L1508.4 712.0 L1508.7 700.9 L1509.0 712.0 L1509.2 698.9 L1509.5 712.0 L1509.7 703.6 L1510.0 712.0 L1510.2 692.7 L1510.5 712.0 L1510.7 696.6 L1511.0 712.0 L1511.2 701.9 L1511.5 712.0 L1511.7 692.9 L1512.0 712.0 L1512.2 704.1 L1512.5 712.0 L1512.8 695.8 L1513.0 712.0 L1513.3 699.6 L1513.5 712.0 L1513.8 703.1 L1514.0 712.0 L1514.3 702.8 L1514.5 712.0 L1514.8 706.4 L1515.1 712.0 L1515.3 697.3 L1515.6 712.0 L1515.8 706.3 L1516.1 712.0 L1516.3 704.9 L1516.6 712.0 L1516.8 705.4 L1517.1 712.0 L1517.3 703.4 L1517.6 712.0 L1517.8 709.1 L1518.1 712.0 L1518.4 697.3 L1518.6 712.0 L1518.9 711.1 L1519.1 712.0 L1519.4 701.1 L1519.6 712.0 L1519.9 712.0 L1520.1 712.0 L1520.4 711.3 L1520.6 712.0 L1520.9 701.6 L1521.1 712.0 L1521.4 697.7 L1521.6 712.0 L1521.9 707.1 L1522.2 712.0 L1522.4 706.2 L1522.7 712.0 L1522.9 694.3 L1523.2 712.0 L1523.4 692.9 L1523.7 712.0 L1523.9 702.1 L1524.2 712.0 L1524.4 704.0 L1524.7 712.0 L1524.9 706.9 L1525.2 712.0 L1525.5 700.4 L1525.7 712.0 L1526.0 710.1 L1526.2 712.0 L1526.5 709.7 L1526.7 712.0 L1527.0 691.6 L1527.2 712.0 L1527.5 697.4 L1527.7 712.0 L1528.0 712.0 L1528.2 712.0 L1528.5 711.9 L1528.8 712.0 L1529.0 697.0 L1529.3 712.0 L1529.5 696.5 L1529.8 712.0 L1530.0 704.9 L1530.3 712.0 L1530.5 696.1 L1530.8 712.0 L1531.0 703.0 L1531.3 712.0 L1531.6 707.6 L1531.8 712.0 L1532.1 703.4 L1532.3 712.0 L1532.6 712.0 L1532.8 712.0 L1533.1 704.5 L1533.3 712.0 L1533.6 707.4 L1533.8 712.0 L1534.1 695.8 L1534.3 712.0 L1534.6 709.1 L1534.9 712.0 L1535.1 708.3 L1535.4 712.0 L1535.6 703.7 L1535.9 712.0 L1536.1 710.8 L1536.4 712.0 L1536.6 702.3 L1536.9 712.0 L1537.1 702.4 L1537.4 712.0 L1537.6 701.4 L1537.9 712.0 L1538.1 692.6 L1538.4 712.0 L1538.7 702.6 L1538.9 712.0 L1539.2 691.7 L1539.4 712.0 L1539.7 696.6 L1539.9 712.0 L1540.2 701.5 L1540.4 712.0 L1540.7 702.3 L1540.9 712.0 L1541.2 712.0 L1541.4 712.0 L1541.7 705.1 L1542.0 712.0 L1542.2 698.8 L1542.5 712.0 L1542.7 697.7 L1543.0 712.0 L1543.2 712.0 L1543.5 712.0 L1543.7 699.1 L1544.0 712.0 L1544.2 695.2 L1544.5 712.0 L1544.7 703.6 L1545.0 712.0 L1545.2 696.1 L1545.5 712.0 L1545.8 700.0 L1546.0 712.0 L1546.3 699.5 L1546.5 712.0 L1546.8 706.2 L1547.0 712.0 L1547.3 696.9 L1547.5 712.0 L1547.8 698.8 L1548.0 712.0 L1548.3 698.0 L1548.5 712.0 L1548.8 687.4 L1549.0 712.0 L1549.3 698.0 L1549.5 712.0 L1549.8 703.4 L1550.1 712.0 L1550.3 691.5 L1550.6 712.0 L1550.8 697.8 L1551.1 712.0 L1551.3 691.3 L1551.6 712.0 L1551.8 694.6 L1552.1 712.0 L1552.3 702.4 L1552.6 712.0 L1552.8 691.5 L1553.1 712.0 L1553.3 695.9 L1553.6 712.0 L1553.9 704.7 L1554.1 712.0 L1554.4 696.1 L1554.6 712.0 L1554.9 692.0 L1555.1 712.0 L1555.4 700.0 L1555.6 712.0 L1555.9 705.1 L1556.1 712.0 L1556.4 696.2 L1556.6 712.0 L1556.9 697.5 L1557.1 712.0 L1557.4 692.3 L1557.6 712.0 L1557.9 701.6 L1558.1 712.0 L1558.4 691.4 L1558.6 712.0 L1558.9 698.7 L1559.2 712.0 L1559.4 705.4 L1559.7 712.0 L1559.9 698.8 L1560.2 712.0 L1560.4 701.0 L1560.7 712.0 L1560.9 694.4 L1561.2 712.0 L1561.4 694.6 L1561.7 712.0 L1561.9 694.5 L1562.2 712.0 L1562.4 692.6 L1562.7 712.0 L1563.0 693.9 L1563.2 712.0 L1563.5 702.9 L1563.7 712.0 L1564.0 700.2 L1564.2 712.0 L1564.5 691.5 L1564.7 712.0 L1565.0 695.4 L1565.2 712.0 L1565.5 701.3 L1565.7 712.0 L1566.0 687.6 L1566.2 712.0 L1566.5 682.6 L1566.7 712.0 L1567.0 695.5 L1567.2 712.0 L1567.5 693.4 L1567.8 712.0 L1568.0 698.9 L1568.3 712.0 L1568.5 703.2 L1568.8 712.0 L1569.0 692.0 L1569.3 712.0 L1569.5 691.7 L1569.8 712.0 L1570.0 700.4 L1570.3 712.0 L1570.5 686.3 L1570.8 712.0 L1571.0 693.9 L1571.3 712.0 L1571.6 686.9 L1571.8 712.0 L1572.1 689.3 L1572.3 712.0 L1572.6 698.5 L1572.8 712.0 L1573.1 698.9 L1573.3 712.0 L1573.6 699.1 L1573.8 712.0 L1574.1 697.1 L1574.3 712.0 L1574.6 695.8 L1574.8 712.0 L1575.1 697.9 L1575.3 712.0 L1575.6 696.5 L1575.8 712.0 L1576.1 703.8 L1576.4 712.0 L1576.6 692.9 L1576.9 712.0 L1577.1 694.2 L1577.4 712.0 L1577.6 699.4 L1577.9 712.0 L1578.1 694.1 L1578.4 712.0 L1578.6 694.3 L1578.9 712.0 L1579.1 695.7 L1579.4 712.0 L1579.6 697.0 L1579.9 712.0 L1580.1 696.2 L1580.4 712.0 L1580.6 692.0 L1580.9 712.0 L1581.2 694.7 L1581.4 712.0 L1581.7 692.3 L1581.9 712.0 L1582.2 699.1 L1582.4 712.0 L1582.7 695.4 L1582.9 712.0 L1583.2 692.1 L1583.4 712.0 L1583.7 696.4 L1583.9 712.0 L1584.2 694.1 L1584.4 712.0 L1584.7 694.2 L1584.9 712.0 L1585.2 697.9 L1585.4 712.0 L1585.7 697.2 L1585.9 712.0 L1586.2 692.7 L1586.4 712.0 L1586.7 690.7 L1587.0 712.0 L1587.2 691.2 L1587.5 712.0 L1587.7 700.1 L1588.0 712.0 L1588.2 695.1 L1588.5 712.0 L1588.7 695.4 L1589.0 712.0 L1589.2 692.8 L1589.5 712.0 L1589.7 694.5 L1590.0 712.0 L1590.2 695.4 L1590.5 712.0 L1590.7 701.9 L1591.0 712.0 L1591.2 696.3 L1591.5 712.0 L1591.8 699.3 L1592.0 712.0 L1592.3 695.8 L1592.5 712.0 L1592.8 694.2 L1593.0 712.0 L1593.3 688.2 L1593.5 712.0 L1593.8 687.3 L1594.0 712.0 L1594.3 682.4 L1594.5 712.0 L1594.8 693.6 L1595.0 712.0 L1595.3 697.4 L1595.5 712.0 L1595.8 685.9 L1596.0 712.0 L1596.3 685.2 L1596.5 712.0 L1596.8 687.0 L1597.1 712.0 L1597.3 694.3 L1597.6 712.0 L1597.8 689.5 L1598.1 712.0 L1598.3 700.7 L1598.6 712.0 L1598.8 701.4 L1599.1 712.0 L1599.3 688.5 L1599.6 712.0 L1599.8 695.6 L1600.1 712.0 L1600.3 691.5 L1600.6 712.0 L1600.8 691.1 L1601.1 712.0 L1601.4 689.1 L1601.6 712.0 L1601.9 688.3 L1602.1 712.0 L1602.4 701.3 L1602.6 712.0 L1602.9 692.6 L1603.1 712.0 L1603.4 690.2 L1603.6 712.0 L1603.9 688.6 L1604.1 712.0 L1604.4 682.6 L1604.6 712.0 L1604.9 692.3 L1605.1 712.0 L1605.4 689.5 L1605.6 712.0 L1605.9 693.1 L1606.1 712.0 L1606.4 685.0 L1606.6 712.0 L1606.9 691.1 L1607.1 712.0 L1607.4 681.2 L1607.7 712.0 L1607.9 686.5 L1608.2 712.0 L1608.4 681.8 L1608.7 712.0 L1608.9 685.7 L1609.2 712.0 L1609.4 688.0 L1609.7 712.0 L1609.9 693.9 L1610.2 712.0 L1610.4 693.9 L1610.7 712.0 L1610.9 689.5 L1611.2 712.0 L1611.4 689.8 L1611.7 712.0 L1611.9 685.0 L1612.2 712.0 L1612.4 684.8 L1612.7 712.0 L1613.0 693.2 L1613.2 712.0 L1613.5 688.8 L1613.7 712.0 L1614.0 693.9 L1614.2 712.0 L1614.5 695.0 L1614.7 712.0 L1615.0 688.7 L1615.2 712.0 L1615.5 695.6 L1615.7 712.0 L1616.0 690.6 L1616.2 712.0 L1616.5 697.6 L1616.7 712.0 L1617.0 687.5 L1617.2 712.0 L1617.5 682.8 L1617.7 712.0 L1618.0 688.9 L1618.2 712.0 L1618.5 686.6 L1618.7 712.0 L1619.0 685.3 L1619.2 712.0 L1619.5 689.3 L1619.8 712.0 L1620.0 680.3 L1620.3 712.0 L1620.5 691.5 L1620.8 712.0 L1621.0 688.8 L1621.3 712.0 L1621.5 686.3 L1621.8 712.0 L1622.0 689.5 L1622.3 712.0 L1622.5 684.1 L1622.8 712.0 L1623.0 687.0 L1623.3 712.0 L1623.5 680.7 L1623.8 712.0 L1624.0 685.7 L1624.3 712.0 L1624.5 689.0 L1624.8 712.0 L1625.0 680.6 L1625.3 712.0 L1625.5 680.0 L1625.8 712.0 L1626.1 678.2 L1626.3 712.0 L1626.6 685.9 L1626.8 712.0 L1627.1 685.9 L1627.3 712.0 L1627.6 690.6 L1627.8 712.0 L1628.1 678.5 L1628.3 712.0 L1628.6 683.7 L1628.8 712.0 L1629.1 683.5 L1629.3 712.0 L1629.6 679.3 L1629.8 712.0 L1630.1 696.0 L1630.3 712.0 L1630.6 678.6 L1630.8 712.0 L1631.1 688.5 L1631.3 712.0 L1631.6 677.7 L1631.8 712.0 L1632.1 686.9 L1632.3 712.0 L1632.6 673.9 L1632.8 712.0 L1633.1 686.3 L1633.3 712.0 L1633.6 684.1 L1633.8 712.0 L1634.1 686.4 L1634.4 712.0 L1634.6 677.3 L1634.9 712.0 L1635.1 682.4 L1635.4 712.0 L1635.6 683.7 L1635.9 712.0 L1636.1 689.8 L1636.4 712.0 L1636.6 690.3 L1636.9 712.0 L1637.1 682.3 L1637.4 712.0 L1637.6 686.5 L1637.9 712.0 L1638.1 677.5 L1638.4 712.0 L1638.6 680.3 L1638.9 712.0 L1639.1 682.0 L1639.4 712.0 L1639.6 688.9 L1639.9 712.0 L1640.1 690.3 L1640.4 712.0 L1640.7 683.8 L1640.9 712.0 L1641.2 686.5 L1641.4 712.0 L1641.7 687.2 L1641.9 712.0 L1642.2 680.8 L1642.4 712.0 L1642.7 677.4 L1642.9 712.0 L1643.2 683.2 L1643.4 712.0 L1643.7 674.9 L1643.9 712.0 L1644.2 681.0 L1644.4 712.0 L1644.7 682.9 L1644.9 712.0 L1645.2 661.2 L1645.4 712.0 L1645.7 688.2 L1645.9 712.0 L1646.2 682.7 L1646.4 712.0 L1646.7 687.5 L1646.9 712.0 L1647.2 683.2 L1647.4 712.0 L1647.7 682.8 L1647.9 712.0 L1648.2 672.9 L1648.4 712.0 L1648.7 683.2 L1649.0 712.0 L1649.2 683.9 L1649.5 712.0 L1649.7 678.8 L1650.0 712.0 L1650.2 672.0 L1650.5 712.0 L1650.7 672.8 L1651.0 712.0 L1651.2 688.3 L1651.5 712.0 L1651.7 683.6 L1652.0 712.0 L1652.2 677.1 L1652.5 712.0 L1652.7 686.1 L1653.0 712.0 L1653.2 688.1 L1653.5 712.0 L1653.7 678.3 L1654.0 712.0 L1654.2 676.4 L1654.5 712.0 L1654.7 686.9 L1655.0 712.0 L1655.2 686.5 L1655.5 712.0 L1655.7 686.2 L1656.0 712.0 L1656.2 686.9 L1656.5 712.0 L1656.7 670.8 L1657.0 712.0 L1657.2 676.9 L1657.5 712.0 L1657.8 689.7 L1658.0 712.0 L1658.3 688.0 L1658.5 712.0 L1658.8 678.4 L1659.0 712.0 L1659.3 681.1 L1659.5 712.0 L1659.8 678.7 L1660.0 712.0 L1660.3 677.2 L1660.5 712.0 L1660.8 671.8 L1661.0 712.0 L1661.3 685.6 L1661.5 712.0 L1661.8 688.3 L1662.0 712.0 L1662.3 689.9 L1662.5 712.0 L1662.8 681.3 L1663.0 712.0 L1663.3 685.3 L1663.5 712.0 L1663.8 686.2 L1664.0 712.0 L1664.3 678.2 L1664.5 712.0 L1664.8 684.7 L1665.0 712.0 L1665.3 678.3 L1665.5 712.0 L1665.8 684.1 L1666.0 712.0 L1666.3 689.1 L1666.6 712.0 L1666.8 680.9 L1667.1 712.0 L1667.3 686.3 L1667.6 712.0 L1667.8 675.1 L1668.1 712.0 L1668.3 680.1 L1668.6 712.0 L1668.8 684.4 L1669.1 712.0 L1669.3 677.2 L1669.6 712.0 L1669.8 686.4 L1670.1 712.0 L1670.3 686.4 L1670.6 712.0 L1670.8 678.2 L1671.1 712.0 L1671.3 682.9 L1671.6 712.0 L1671.8 685.9 L1672.1 712.0 L1672.3 682.9 L1672.6 712.0 L1672.8 689.3 L1673.1 712.0 L1673.3 688.1 L1673.6 712.0 L1673.9 682.3 L1674.1 712.0 L1674.4 675.5 L1674.6 712.0 L1674.9 674.1 L1675.1 712.0 L1675.4 688.2 L1675.6 712.0 L1675.9 689.9 L1676.1 712.0 L1676.4 682.3 L1676.6 712.0 L1676.9 681.3 L1677.1 712.0 L1677.4 680.9 L1677.6 712.0 L1677.9 686.4 L1678.1 712.0 L1678.4 683.4 L1678.6 712.0 L1678.9 688.6 L1679.1 712.0 L1679.4 689.9 L1679.6 712.0 L1679.9 684.0 L1680.1 712.0 L1680.4 676.5 L1680.6 712.0 L1680.9 672.4 L1681.1 712.0 L1681.4 682.1 L1681.6 712.0 L1681.9 682.3 L1682.1 712.0 L1682.4 684.3 L1682.6 712.0 L1682.9 684.5 L1683.1 712.0 L1683.4 687.0 L1683.6 712.0 L1683.9 688.4 L1684.2 712.0 L1684.4 685.8 L1684.7 712.0 L1684.9 684.3 L1685.2 712.0 L1685.4 685.7 L1685.7 712.0 L1685.9 689.0 L1686.2 712.0 L1686.4 686.3 L1686.7 712.0 L1686.9 683.2 L1687.2 712.0 L1687.4 689.5 L1687.7 712.0 L1687.9 685.0 L1688.2 712.0 L1688.4 679.2 L1688.7 712.0 L1688.9 692.7 L1689.2 712.0 L1689.4 689.7 L1689.7 712.0 L1689.9 682.3 L1690.2 712.0 L1690.4 684.0 L1690.7 712.0 L1690.9 691.7 L1691.2 712.0 L1691.4 684.0 L1691.7 712.0 L1691.9 687.6 L1692.2 712.0 L1692.4 682.5 L1692.7 712.0 L1692.9 692.8 L1693.2 712.0 L1693.4 690.3 L1693.7 712.0 L1693.9 692.0 L1694.2 712.0 L1694.4 686.8 L1694.7 712.0 L1694.9 695.4 L1695.2 712.0 L1695.5 683.3 L1695.7 712.0 L1696.0 687.2 L1696.2 712.0 L1696.5 692.5 L1696.7 712.0 L1697.0 690.0 L1697.2 712.0 L1697.5 689.7 L1697.7 712.0 L1698.0 686.9 L1698.2 712.0 L1698.5 692.6 L1698.7 712.0 L1699.0 692.5 L1699.2 712.0 L1699.5 686.0 L1699.7 712.0 L1700.0 686.2 L1700.2 712.0 L1700.5 688.8 L1700.7 712.0 L1701.0 694.3 L1701.2 712.0 L1701.5 690.8 L1701.7 712.0" fill="none" stroke="#000" stroke-width="2.2" stroke-linejoin="round"/></g><path d="M620.5 102V706.5H1733" fill="none" stroke="#bcbcbc" stroke-width="1"/><path d="M619 102.5H1734" stroke="#000" stroke-width="1"/><path d="M1733.5 102V709.5" stroke="#000" stroke-width="1"/></svg>
<span class="t" style="left:602.81px;top:697.30px;font-size:12.5px;color:#1c1c1c;transform:scaleX(0.8350);">-10</span>
<span class="t" style="left:612.09px;top:656.22px;font-size:12.5px;color:#1c1c1c;transform:scaleX(0.8350);">0</span>
<span class="t" style="left:606.29px;top:615.14px;font-size:12.5px;color:#1c1c1c;transform:scaleX(0.8350);">10</span>
<span class="t" style="left:606.29px;top:574.06px;font-size:12.5px;color:#1c1c1c;transform:scaleX(0.8350);">20</span>
<span class="t" style="left:606.29px;top:532.98px;font-size:12.5px;color:#1c1c1c;transform:scaleX(0.8350);">30</span>
<span class="t" style="left:606.29px;top:491.90px;font-size:12.5px;color:#1c1c1c;transform:scaleX(0.8350);">40</span>
<span class="t" style="left:606.29px;top:450.82px;font-size:12.5px;color:#1c1c1c;transform:scaleX(0.8350);">50</span>
<span class="t" style="left:606.29px;top:409.74px;font-size:12.5px;color:#1c1c1c;transform:scaleX(0.8350);">60</span>
<span class="t" style="left:606.29px;top:368.66px;font-size:12.5px;color:#1c1c1c;transform:scaleX(0.8350);">70</span>
<span class="t" style="left:606.29px;top:327.58px;font-size:12.5px;color:#1c1c1c;transform:scaleX(0.8350);">80</span>
<span class="t" style="left:606.29px;top:286.50px;font-size:12.5px;color:#1c1c1c;transform:scaleX(0.8350);">90</span>
<span class="t" style="left:600.48px;top:245.42px;font-size:12.5px;color:#1c1c1c;transform:scaleX(0.8350);">100</span>
<span class="t" style="left:601.26px;top:204.34px;font-size:12.5px;color:#1c1c1c;transform:scaleX(0.8350);">110</span>
<span class="t" style="left:600.48px;top:163.26px;font-size:12.5px;color:#1c1c1c;transform:scaleX(0.8350);">120</span>
<span class="t" style="left:600.48px;top:122.18px;font-size:12.5px;color:#1c1c1c;transform:scaleX(0.8350);">130</span>
<span class="t" style="left:599.80px;top:86.64px;font-size:12px;color:#1c1c1c;transform:scaleX(0.6684);font-weight:bold;">SPL</span>
<div class="abs" style="left:586px;top:94px;width:33px;height:17px;background:#fff;border:1px solid #0000f0;"></div>
<span class="t" style="left:589.60px;top:97.22px;font-size:12.5px;color:#0000e8;transform:scaleX(0.8503);">136,0</span>
<span class="t" style="left:615.09px;top:712.82px;font-size:12.5px;color:#1c1c1c;transform:scaleX(0.8350);">10</span>
<span class="t" style="left:711.42px;top:712.82px;font-size:12.5px;color:#1c1c1c;transform:scaleX(0.8350);">20</span>
<span class="t" style="left:767.77px;top:712.82px;font-size:12.5px;color:#1c1c1c;transform:scaleX(0.8350);">30</span>
<span class="t" style="left:807.75px;top:712.82px;font-size:12.5px;color:#1c1c1c;transform:scaleX(0.8350);">40</span>
<span class="t" style="left:838.77px;top:712.82px;font-size:12.5px;color:#1c1c1c;transform:scaleX(0.8350);">50</span>
<span class="t" style="left:864.10px;top:712.82px;font-size:12.5px;color:#1c1c1c;transform:scaleX(0.8350);">60</span>
<span class="t" style="left:885.53px;top:712.82px;font-size:12.5px;color:#1c1c1c;transform:scaleX(0.8350);">70</span>
<span class="t" style="left:904.08px;top:712.82px;font-size:12.5px;color:#1c1c1c;transform:scaleX(0.8350);">80</span>
<span class="t" style="left:932.19px;top:712.82px;font-size:12.5px;color:#1c1c1c;transform:scaleX(0.8350);">100</span>
<span class="t" style="left:1028.52px;top:712.82px;font-size:12.5px;color:#1c1c1c;transform:scaleX(0.8350);">200</span>
<span class="t" style="left:1084.87px;top:712.82px;font-size:12.5px;color:#1c1c1c;transform:scaleX(0.8350);">300</span>
<span class="t" style="left:1124.85px;top:712.82px;font-size:12.5px;color:#1c1c1c;transform:scaleX(0.8350);">400</span>
<span class="t" style="left:1155.86px;top:712.82px;font-size:12.5px;color:#1c1c1c;transform:scaleX(0.8350);">500</span>
<span class="t" style="left:1181.20px;top:712.82px;font-size:12.5px;color:#1c1c1c;transform:scaleX(0.8350);">600</span>
<span class="t" style="left:1221.18px;top:712.82px;font-size:12.5px;color:#1c1c1c;transform:scaleX(0.8350);">800</span>
<span class="t" style="left:1255.39px;top:712.82px;font-size:12.5px;color:#1c1c1c;transform:scaleX(0.8350);">1k</span>
<span class="t" style="left:1351.72px;top:712.82px;font-size:12.5px;color:#1c1c1c;transform:scaleX(0.8350);">2k</span>
<span class="t" style="left:1408.07px;top:712.82px;font-size:12.5px;color:#1c1c1c;transform:scaleX(0.8350);">3k</span>
<span class="t" style="left:1448.05px;top:712.82px;font-size:12.5px;color:#1c1c1c;transform:scaleX(0.8350);">4k</span>
<span class="t" style="left:1479.06px;top:712.82px;font-size:12.5px;color:#1c1c1c;transform:scaleX(0.8350);">5k</span>
<span class="t" style="left:1504.40px;top:712.82px;font-size:12.5px;color:#1c1c1c;transform:scaleX(0.8350);">6k</span>
<span class="t" style="left:1525.82px;top:712.82px;font-size:12.5px;color:#1c1c1c;transform:scaleX(0.8350);">7k</span>
<span class="t" style="left:1544.38px;top:712.82px;font-size:12.5px;color:#1c1c1c;transform:scaleX(0.8350);">8k</span>
<span class="t" style="left:1572.49px;top:712.82px;font-size:12.5px;color:#1c1c1c;transform:scaleX(0.8350);">10k</span>
<span class="t" style="left:1668.82px;top:712.82px;font-size:12.5px;color:#1c1c1c;transform:scaleX(0.8350);">20k</span>
<div class="abs" style="left:1717px;top:709px;width:32px;height:17px;background:#fff;border:1px solid #0000f0;"></div>
<span class="t" style="left:1719.60px;top:712.62px;font-size:12.5px;color:#0000e8;transform:scaleX(0.8895);">30,0k</span>
<div class="abs" style="left:632px;top:730px;width:183px;height:12px;background:#fff;"></div>
<div class="abs" style="left:815px;top:730px;width:906px;height:12px;background:#d7d7d7;"></div>
<svg class="abs" style="left:620px;top:728px" width="1120" height="16"><path d="M10 4V12L4.5 8Z M1105 4V12L1110.5 8Z" fill="#777"/></svg>
<div class="abs" style="left:712px;top:355px;width:10px;height:13px;background:rgba(255,255,255,.72);"></div>
<span class="t" style="left:713.90px;top:356.14px;font-size:12px;color:#1c1c1c;transform:scaleX(0.9300);">1</span>
<div class="abs" style="left:808px;top:537px;width:10px;height:13px;background:rgba(255,255,255,.72);"></div>
<span class="t" style="left:810.40px;top:538.14px;font-size:12px;color:#1c1c1c;transform:scaleX(0.9300);">2</span>
<div class="abs" style="left:865px;top:558px;width:10px;height:13px;background:rgba(255,255,255,.72);"></div>
<span class="t" style="left:866.80px;top:559.64px;font-size:12px;color:#1c1c1c;transform:scaleX(0.9300);">3</span>
<div class="abs" style="left:905px;top:584px;width:10px;height:13px;background:rgba(255,255,255,.72);"></div>
<span class="t" style="left:907.10px;top:584.64px;font-size:12px;color:#1c1c1c;transform:scaleX(0.9300);">4</span>
<div class="abs" style="left:935px;top:511px;width:10px;height:13px;background:rgba(255,255,255,.72);"></div>
<span class="t" style="left:937.10px;top:512.44px;font-size:12px;color:#1c1c1c;transform:scaleX(0.9300);">5</span>
<div class="abs" style="left:961px;top:602px;width:10px;height:13px;background:rgba(255,255,255,.72);"></div>
<span class="t" style="left:962.80px;top:603.24px;font-size:12px;color:#1c1c1c;transform:scaleX(0.9300);">6</span>
<div class="abs" style="left:983px;top:587px;width:10px;height:13px;background:rgba(255,255,255,.72);"></div>
<span class="t" style="left:985.10px;top:587.74px;font-size:12px;color:#1c1c1c;transform:scaleX(0.9300);">7</span>
<div class="abs" style="left:1001px;top:592px;width:10px;height:13px;background:rgba(255,255,255,.72);"></div>
<span class="t" style="left:1003.10px;top:593.64px;font-size:12px;color:#1c1c1c;transform:scaleX(0.9300);">8</span>
<div class="abs" style="left:1018px;top:599px;width:10px;height:13px;background:rgba(255,255,255,.72);"></div>
<span class="t" style="left:1020.20px;top:600.14px;font-size:12px;color:#1c1c1c;transform:scaleX(0.9300);">9</span>
<div class="abs" style="left:697px;top:104px;width:286px;height:210px;background:rgba(255,255,255,.86);border:2px solid #cfcfcf;border-radius:9px;"></div>
<span class="t" style="left:749.00px;top:114.92px;font-size:12.5px;color:#1c1c1c;transform:scaleX(0.9471);font-weight:bold;">20,00 Hz  -47,92 dBFS  69,87 dB</span>
<span class="t" style="left:739.00px;top:135.12px;font-size:12.5px;color:#1c1c1c;transform:scaleX(0.8578);">Span: </span>
<span class="t" style="left:771.20px;top:135.12px;font-size:12.5px;color:#1c1c1c;transform:scaleX(0.9453);font-weight:bold;">0 .. 22 800 Hz   Gain -29,12 dB</span>
<span class="t" style="left:705.89px;top:155.22px;font-size:12.5px;color:#1c1c1c;transform:scaleX(0.9300);">N+D:</span>
<span class="t" style="left:737.00px;top:155.22px;font-size:12.5px;color:#1c1c1c;transform:scaleX(0.9300);font-weight:bold;">32,4 dB A</span>
<span class="t" style="left:859.19px;top:159.03px;font-size:8px;color:#1c1c1c;transform:scaleX(0.9000);font-weight:bold;">H2..50:</span>
<span class="t" style="left:835.30px;top:155.22px;font-size:12.5px;color:#1c1c1c;transform:scaleX(0.9300);">THD</span>
<span class="t" style="left:887.70px;top:155.22px;font-size:12.5px;color:#1c1c1c;transform:scaleX(0.9300);font-weight:bold;">1,70 %</span>
<span class="t" style="left:721.08px;top:175.22px;font-size:12.5px;color:#1c1c1c;transform:scaleX(0.9300);">N:</span>
<span class="t" style="left:737.00px;top:175.22px;font-size:12.5px;color:#1c1c1c;transform:scaleX(0.9300);font-weight:bold;">45,3 dB</span>
<span class="t" style="left:840.49px;top:175.22px;font-size:12.5px;color:#1c1c1c;transform:scaleX(0.9300);">THD+N:</span>
<span class="t" style="left:887.70px;top:175.22px;font-size:12.5px;color:#1c1c1c;transform:scaleX(0.9300);font-weight:bold;">6,13 %</span>
<span class="t" style="left:704.93px;top:195.22px;font-size:12.5px;color:#1c1c1c;transform:scaleX(0.9300);">SNR:</span>
<span class="t" style="left:737.00px;top:195.22px;font-size:12.5px;color:#1c1c1c;transform:scaleX(0.9300);font-weight:bold;"> 24,6 dB</span>
<span class="t" style="left:846.62px;top:195.22px;font-size:12.5px;color:#1c1c1c;transform:scaleX(0.9300);">ENOB:</span>
<span class="t" style="left:887.70px;top:195.22px;font-size:12.5px;color:#1c1c1c;transform:scaleX(0.9300);font-weight:bold;">11,7 bits</span>
<span class="t" style="left:732.40px;top:215.22px;font-size:12.5px;color:#1c1c1c;transform:scaleX(0.8920);">HH 10 .. 50</span>
<span class="t" style="left:854.38px;top:215.22px;font-size:12.5px;color:#1c1c1c;transform:scaleX(0.9300);">HHD:</span>
<span class="t" style="left:887.70px;top:215.22px;font-size:12.5px;color:#1c1c1c;transform:scaleX(0.9300);font-weight:bold;">0,50 %</span>
<span class="t" style="left:710.07px;top:235.22px;font-size:12.5px;color:#1c1c1c;transform:scaleX(0.9300);">2nd:</span>
<span class="t" style="left:737.00px;top:235.22px;font-size:12.5px;color:#1c1c1c;transform:scaleX(0.9300);font-weight:bold;">0,58 %</span>
<span class="t" style="left:862.77px;top:235.22px;font-size:12.5px;color:#1c1c1c;transform:scaleX(0.9300);">3rd:</span>
<span class="t" style="left:887.70px;top:235.22px;font-size:12.5px;color:#1c1c1c;transform:scaleX(0.9300);font-weight:bold;">0,35 %</span>
<span class="t" style="left:713.31px;top:255.22px;font-size:12.5px;color:#1c1c1c;transform:scaleX(0.9300);">4th:</span>
<span class="t" style="left:737.00px;top:255.22px;font-size:12.5px;color:#1c1c1c;transform:scaleX(0.9300);font-weight:bold;">0,23 %</span>
<span class="t" style="left:863.41px;top:255.22px;font-size:12.5px;color:#1c1c1c;transform:scaleX(0.9300);">5th:</span>
<span class="t" style="left:887.70px;top:255.22px;font-size:12.5px;color:#1c1c1c;transform:scaleX(0.9300);font-weight:bold;">1,43 %</span>
<span class="t" style="left:713.31px;top:275.22px;font-size:12.5px;color:#1c1c1c;transform:scaleX(0.9300);">6th:</span>
<span class="t" style="left:737.00px;top:275.22px;font-size:12.5px;color:#1c1c1c;transform:scaleX(0.9300);font-weight:bold;">0,13 %</span>
<span class="t" style="left:863.41px;top:275.22px;font-size:12.5px;color:#1c1c1c;transform:scaleX(0.9300);">7th:</span>
<span class="t" style="left:887.70px;top:275.22px;font-size:12.5px;color:#1c1c1c;transform:scaleX(0.9300);font-weight:bold;">0,16 %</span>
<span class="t" style="left:713.31px;top:295.22px;font-size:12.5px;color:#1c1c1c;transform:scaleX(0.9300);">8th:</span>
<span class="t" style="left:737.00px;top:295.22px;font-size:12.5px;color:#1c1c1c;transform:scaleX(0.9300);font-weight:bold;">0,12 %</span>
<span class="t" style="left:863.41px;top:295.22px;font-size:12.5px;color:#1c1c1c;transform:scaleX(0.9300);">9th:</span>
<span class="t" style="left:887.70px;top:295.22px;font-size:12.5px;color:#1c1c1c;transform:scaleX(0.9300);font-weight:bold;">0,12 %</span>
<div class="abs" style="left:1525px;top:104px;width:122px;height:88px;background:rgba(255,255,255,.88);border:2px solid #d0d0d0;border-radius:9px;"></div>
<span class="t" style="left:1550.25px;top:115.26px;font-size:18px;color:#1c1c1c;transform:scaleX(0.9644);">69,88 dB</span>
<span class="t" style="left:1547.10px;top:136.96px;font-size:9.5px;color:#000;transform:scaleX(0.8768);">63,7 dB C, 32,7 dB A</span>
<span class="t" style="left:1535.50px;top:149.96px;font-size:9.5px;color:#000;transform:scaleX(0.8896);">Peak sample: -47,04 dBFS</span>
<span class="t" style="left:1543.00px;top:162.96px;font-size:9.5px;color:#000;transform:scaleX(0.9049);">43,1 dB 22 - 22k UNW</span>
<span class="t" style="left:1560.50px;top:176.16px;font-size:9.5px;color:#000;transform:scaleX(0.9066);">17,0 dB &gt;22k</span>
<div class="abs" style="left:1680px;top:105px;width:51px;height:47px;background:#d8d8d8;border:1px solid #9a9a9a;border-radius:3px;box-shadow:inset 1px 1px 0 #8a8a8a;"></div>
<svg class="abs" style="left:1692px;top:114px" width="28" height="28"><defs><radialGradient id="rg" cx=".5" cy=".35" r=".6"><stop offset="0" stop-color="#ff9a80"/><stop offset=".5" stop-color="#ff3a18"/><stop offset="1" stop-color="#d82000"/></radialGradient><filter id="rb" x="-50%" y="-50%" width="200%" height="200%"><feGaussianBlur stdDeviation="1.6"/></filter></defs><circle cx="13" cy="13.4" r="7" fill="#ff5030" filter="url(#rb)" opacity=".8"/><circle cx="13" cy="13.4" r="5.6" fill="url(#rg)"/></svg>
<div class="abs" style="left:677px;top:746px;width:979px;height:24px;background:#fff;border:1px solid #dcdcdc;"></div>
<div class="cb dis" style="left:685px;top:752px;width:14px;height:14px;"><svg width="12" height="12"><path d="M2.3 6.2L5 9.2L9.9 2.6" fill="none" stroke="#a8a8a8" stroke-width="2"/></svg></div>
<span class="t" style="left:705.30px;top:753.02px;font-size:12.5px;color:#a8a8a8;transform:scaleX(0.9543);">No measurement</span>
<span class="t" style="left:956.60px;top:753.02px;font-size:12.5px;color:#b0b0b0;transform:scaleX(0.8502);">dB</span>
<div class="cb on" style="left:1008px;top:752px;width:14px;height:14px;"><svg width="12" height="12"><path d="M2.3 6.2L5 9.2L9.9 2.6" fill="none" stroke="#2a7de1" stroke-width="2"/></svg></div>
<span class="t" style="left:1028.40px;top:753.02px;font-size:12.5px;color:#1c1c1c;transform:scaleX(0.9440);">Spectrum</span>
<div class="abs" style="left:1158px;top:757px;width:51px;height:2px;background:#000;"></div>
<span class="t" style="left:1279.00px;top:753.02px;font-size:12.5px;color:#1c1c1c;transform:scaleX(0.8895);">dB</span>
<div class="cb" style="left:1331px;top:752px;width:14px;height:14px;"></div>
<span class="t" style="left:1351.00px;top:753.02px;font-size:12.5px;color:#e0001a;transform:scaleX(0.8774);">Peak</span>
<span class="t" style="left:1602.00px;top:753.02px;font-size:12.5px;color:#e0001a;transform:scaleX(0.8895);">dB</span>
</body></html>
